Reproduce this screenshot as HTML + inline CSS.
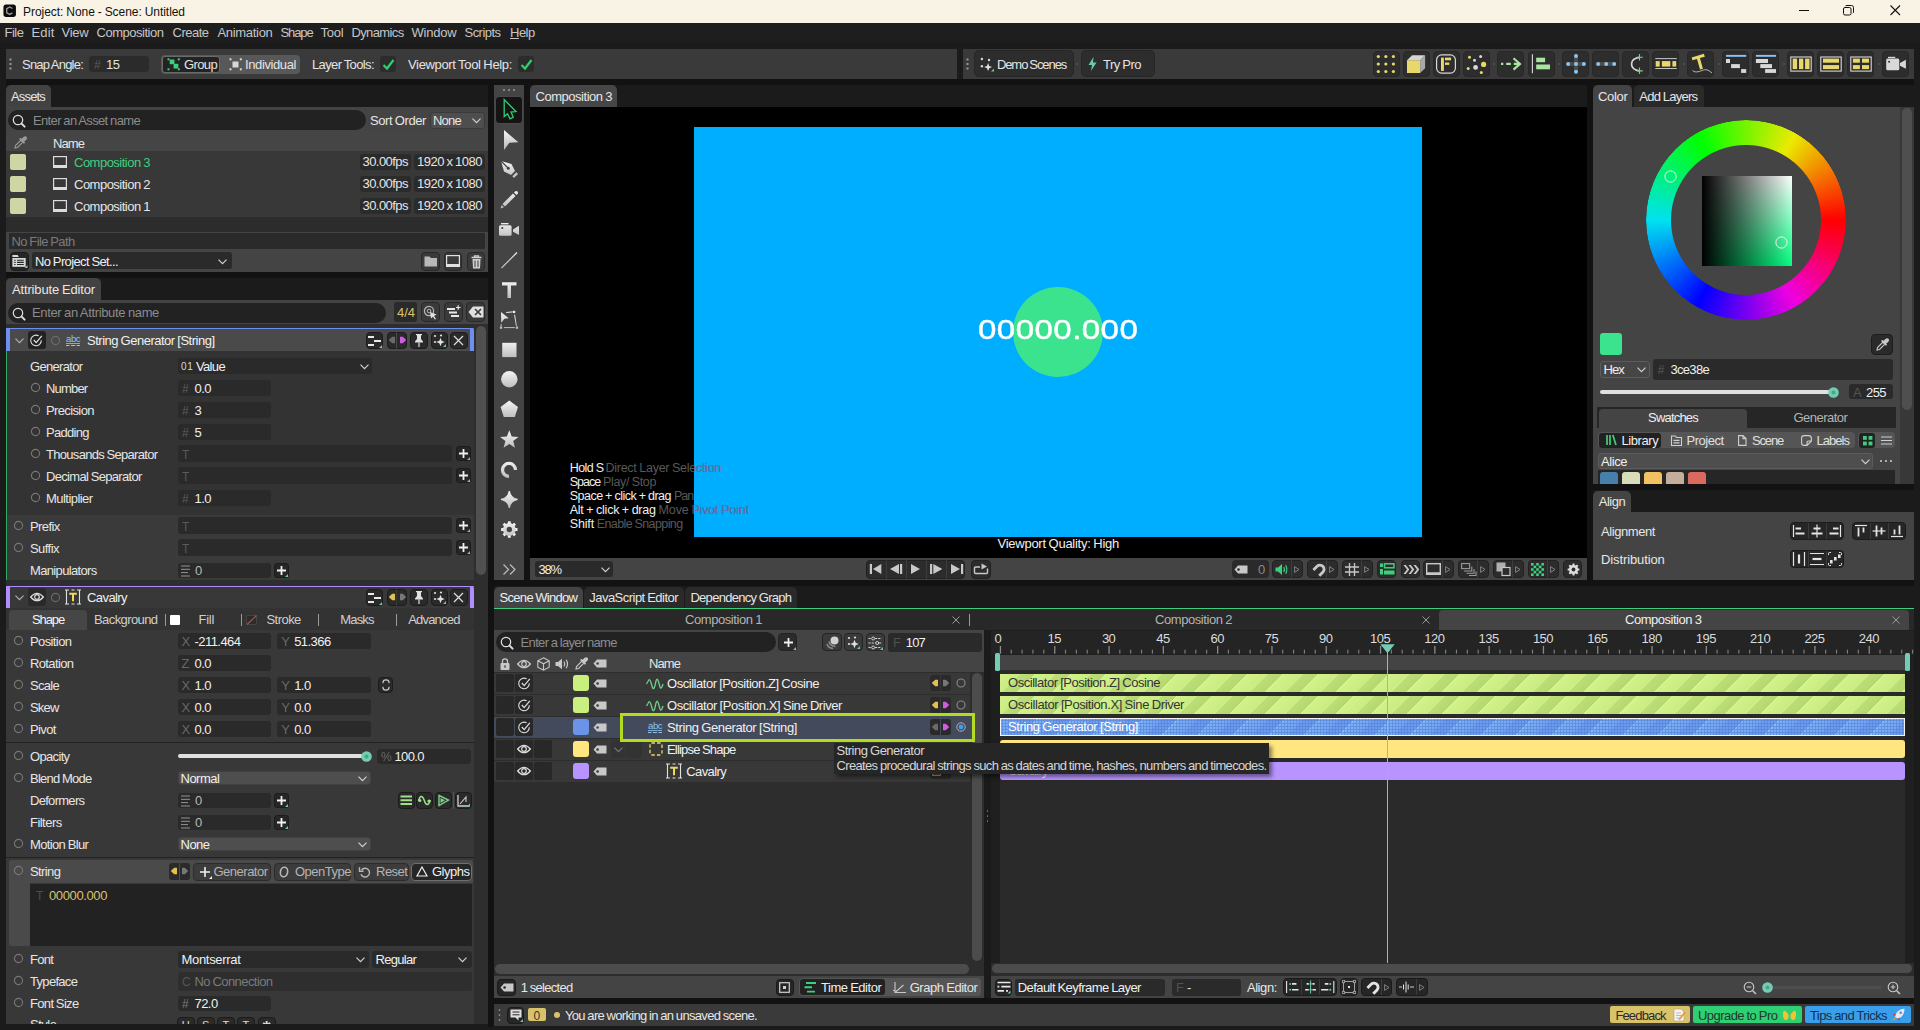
<!DOCTYPE html>
<html lang="en"><head><meta charset="utf-8"><title>Project: None - Scene: Untitled</title>
<style>html,body{margin:0;padding:0;}body{width:1920px;height:1030px;overflow:hidden;background:#1b1b1b;position:relative;font-family:"Liberation Sans",sans-serif;font-size:13px;color:#dcdcdc;}
.a{position:absolute;box-sizing:border-box;overflow:visible;}svg.a{overflow:visible}</style></head>
<body>
<div class="a " style="left:6px;top:79px;width:1908px;height:6.2px;background:#121212;"></div>
<div class="a " style="left:488.2px;top:85.2px;width:5.8px;height:942px;background:#121212;"></div>
<div class="a " style="left:524px;top:85.2px;width:6px;height:494.6px;background:#121212;"></div>
<div class="a " style="left:1587px;top:85.2px;width:6px;height:494.6px;background:#121212;"></div>
<div class="a " style="left:494px;top:579.8px;width:1420px;height:6.2px;background:#121212;"></div>
<div class="a " style="left:6px;top:272px;width:482.2px;height:6px;background:#121212;"></div>
<div class="a " style="left:1593px;top:484px;width:321px;height:6.4px;background:#121212;"></div>
<div class="a " style="left:494px;top:997.8px;width:1420px;height:6.2px;background:#121212;"></div>
<div class="a " style="left:0px;top:0px;width:1920px;height:23px;background:#f9f3e5;"></div>
<svg class="a" style="left:3.4px;top:4.4px;" width="13.4" height="13.4" viewBox="0 0 15 15"><rect x="0.5" y="0.5" width="14" height="14" rx="3" fill="#0c0c0c"/><path d="M10.6 5 L7.5 3.3 L4.2 5.2 V9.8 L7.5 11.7 L10.6 10" fill="none" stroke="#9a9a9a" stroke-width="1.5"/></svg>
<div class="a" style="left:23.0px;top:1.5px;height:20px;line-height:20px;color:#111;font-size:12px;letter-spacing:-0.050px;word-spacing:-0.3px;white-space:pre;">Project: None - Scene: Untitled</div>
<svg class="a" style="left:1799px;top:10px;" width="11" height="1" viewBox="0 0 11 1"><rect width="10" height="1" fill="#111"/></svg>
<svg class="a" style="left:1843px;top:5px;" width="12" height="11" viewBox="0 0 12 11"><rect x="0.5" y="2.5" width="7.5" height="7.5" rx="1.5" fill="none" stroke="#111" stroke-width="1"/><path d="M2.5 1 Q2.8 0.5 4 0.5 H8.5 Q10.5 0.5 10.5 2.5 V7 Q10.5 7.8 10 8.2" fill="none" stroke="#111"/></svg>
<svg class="a" style="left:1890px;top:5px;" width="11" height="11" viewBox="0 0 11 11"><path d="M0.5 0.5 L10 10 M10 0.5 L0.5 10" stroke="#111" stroke-width="1.1" fill="none"/></svg>
<div class="a " style="left:0px;top:23px;width:1920px;height:18.5px;background:#1e1e1e;"></div>
<div class="a" style="left:4.5px;top:22.9px;height:20px;line-height:20px;color:#c6c6c6;font-size:13px;letter-spacing:-0.487px;word-spacing:-0.5px;white-space:pre;">File</div>
<div class="a" style="left:31.5px;top:22.9px;height:20px;line-height:20px;color:#c6c6c6;font-size:13px;letter-spacing:0.149px;word-spacing:-0.5px;white-space:pre;">Edit</div>
<div class="a" style="left:61.5px;top:22.9px;height:20px;line-height:20px;color:#c6c6c6;font-size:13px;letter-spacing:-0.236px;word-spacing:-0.5px;white-space:pre;">View</div>
<div class="a" style="left:96.5px;top:22.9px;height:20px;line-height:20px;color:#c6c6c6;font-size:13px;letter-spacing:-0.478px;word-spacing:-0.5px;white-space:pre;">Composition</div>
<div class="a" style="left:172.5px;top:22.9px;height:20px;line-height:20px;color:#c6c6c6;font-size:13px;letter-spacing:-0.504px;word-spacing:-0.5px;white-space:pre;">Create</div>
<div class="a" style="left:217.5px;top:22.9px;height:20px;line-height:20px;color:#c6c6c6;font-size:13px;letter-spacing:-0.312px;word-spacing:-0.5px;white-space:pre;">Animation</div>
<div class="a" style="left:280.5px;top:22.9px;height:20px;line-height:20px;color:#c6c6c6;font-size:13px;letter-spacing:-1.119px;word-spacing:-0.5px;white-space:pre;">Shape</div>
<div class="a" style="left:320.5px;top:22.9px;height:20px;line-height:20px;color:#c6c6c6;font-size:13px;letter-spacing:-0.212px;word-spacing:-0.5px;white-space:pre;">Tool</div>
<div class="a" style="left:351.5px;top:22.9px;height:20px;line-height:20px;color:#c6c6c6;font-size:13px;letter-spacing:-0.634px;word-spacing:-0.5px;white-space:pre;">Dynamics</div>
<div class="a" style="left:411.5px;top:22.9px;height:20px;line-height:20px;color:#c6c6c6;font-size:13px;letter-spacing:-0.206px;word-spacing:-0.5px;white-space:pre;">Window</div>
<div class="a" style="left:464.5px;top:22.9px;height:20px;line-height:20px;color:#c6c6c6;font-size:13px;letter-spacing:-0.533px;word-spacing:-0.5px;white-space:pre;">Scripts</div>
<div class="a" style="left:510.0px;top:22.9px;height:20px;line-height:20px;color:#c6c6c6;font-size:13px;letter-spacing:-0.500px;word-spacing:-0.5px;white-space:pre;"><u>H</u>elp</div>
<div class="a " style="left:6px;top:49px;width:951px;height:30px;background:#3a3a3a;"></div>
<svg class="a" style="left:9px;top:57px;" width="3" height="14" viewBox="0 0 3 14"><rect x="0.5" y="1.5" width="2" height="2" fill="#999"/><rect x="0.5" y="6" width="2" height="2" fill="#999"/><rect x="0.5" y="10.5" width="2" height="2" fill="#999"/></svg>
<div class="a" style="left:22.0px;top:54.5px;height:20px;line-height:20px;color:#e4e4e4;font-size:13px;letter-spacing:-0.784px;word-spacing:-0.5px;white-space:pre;">Snap Angle:</div>
<div class="a " style="left:89px;top:56px;width:60px;height:16px;background:#2b2b2b;border-radius:3px;"></div>
<div class="a" style="left:94.0px;top:54.5px;height:20px;line-height:20px;color:#5a5a5a;font-size:12px;letter-spacing:-0.415px;word-spacing:-0.5px;white-space:pre;">#</div>
<div class="a" style="left:106.0px;top:54.5px;height:20px;line-height:20px;color:#e4e4e4;font-size:13px;letter-spacing:-0.450px;word-spacing:-0.5px;white-space:pre;">15</div>
<div class="a " style="left:161px;top:55px;width:139px;height:19px;background:#585858;border-radius:4px;"></div>
<div class="a " style="left:162px;top:56px;width:58px;height:17px;background:#232323;border-radius:3px;border:1px solid #6a6a6a;box-sizing:border-box;"></div>
<svg class="a" style="left:167px;top:58px;" width="13" height="13" viewBox="0 0 13 13"><rect x="2.7" y="1.5" width="4.7" height="4.7" fill="#3ecf7d"/><rect x="6.6" y="5.8" width="4.7" height="4.7" fill="#3ecf7d"/><rect x="0.5" y="0.3" width="2" height="2" fill="#3ecf7d"/><rect x="0.5" y="10.3" width="2" height="2" fill="#3ecf7d"/><rect x="10.8" y="0.3" width="2" height="2" fill="#3ecf7d"/><rect x="10.8" y="10.3" width="2" height="2" fill="#3ecf7d"/></svg>
<div class="a" style="left:184.0px;top:54.5px;height:20px;line-height:20px;color:#e4e4e4;font-size:13px;letter-spacing:-0.627px;word-spacing:-0.5px;white-space:pre;">Group</div>
<svg class="a" style="left:229px;top:58px;" width="13" height="13" viewBox="0 0 13 13"><rect x="3.5" y="3.5" width="6" height="6" fill="#d8d8d8"/><rect x="0.5" y="0.3" width="2" height="2" fill="#d8d8d8"/><rect x="0.5" y="10.3" width="2" height="2" fill="#d8d8d8"/><rect x="10.8" y="0.3" width="2" height="2" fill="#d8d8d8"/><rect x="10.8" y="10.3" width="2" height="2" fill="#d8d8d8"/></svg>
<div class="a" style="left:245.0px;top:54.5px;height:20px;line-height:20px;color:#e4e4e4;font-size:13px;letter-spacing:-0.393px;word-spacing:-0.5px;white-space:pre;">Individual</div>
<div class="a" style="left:312.0px;top:54.5px;height:20px;line-height:20px;color:#e4e4e4;font-size:13px;letter-spacing:-0.613px;word-spacing:-0.5px;white-space:pre;">Layer Tools:</div>
<div class="a " style="left:380px;top:56px;width:16px;height:16px;background:#2c2c2c;border-radius:3px;"></div>
<svg class="a" style="left:381.5px;top:57.5px;" width="13" height="13" viewBox="0 0 13 13"><path d="M1.5 7 L5 10.5 L11.5 2" fill="none" stroke="#2fd070" stroke-width="2.2"/></svg>
<div class="a" style="left:408.0px;top:54.5px;height:20px;line-height:20px;color:#e4e4e4;font-size:13px;letter-spacing:-0.344px;word-spacing:-0.5px;white-space:pre;">Viewport Tool Help:</div>
<div class="a " style="left:518px;top:56px;width:16px;height:16px;background:#2c2c2c;border-radius:3px;"></div>
<svg class="a" style="left:519.5px;top:57.5px;" width="13" height="13" viewBox="0 0 13 13"><path d="M1.5 7 L5 10.5 L11.5 2" fill="none" stroke="#2fd070" stroke-width="2.2"/></svg>
<div class="a " style="left:963px;top:49px;width:951px;height:30px;background:#3a3a3a;"></div>
<svg class="a" style="left:966px;top:57px;" width="3" height="14" viewBox="0 0 3 14"><rect x="0.5" y="1.5" width="2" height="2" fill="#999"/><rect x="0.5" y="6" width="2" height="2" fill="#999"/><rect x="0.5" y="10.5" width="2" height="2" fill="#999"/></svg>
<div class="a " style="left:974.4px;top:50.4px;width:99.2px;height:27px;background:#2d2d2d;border-radius:5px;border:1px solid #262626;box-sizing:border-box;"></div>
<svg class="a" style="left:979px;top:56px;" width="16" height="16" viewBox="0 0 16 16"><path d="M9.1 7.1 L10.219999999999999 9.98 L13.1 11.1 L10.219999999999999 12.219999999999999 L9.1 15.1 L7.9799999999999995 12.219999999999999 L5.1 11.1 L7.9799999999999995 9.98 Z" fill="#e0e0e0"/><circle cx="2.9" cy="3" r="1.2" fill="#d8d8d8"/><circle cx="10" cy="4" r="1.2" fill="#d8d8d8"/><circle cx="2.9" cy="10.3" r="1.2" fill="#d8d8d8"/><path d="M15 12.5 V15.5 H12 Z" fill="#6ec9a0"/></svg>
<div class="a" style="left:996.9px;top:54.900000000000006px;height:20px;line-height:20px;color:#e4e4e4;font-size:13px;letter-spacing:-1.069px;word-spacing:-0.5px;white-space:pre;">Demo Scenes</div>
<div class="a " style="left:1081.3px;top:50.4px;width:74px;height:27px;background:#2d2d2d;border-radius:5px;border:1px solid #262626;box-sizing:border-box;"></div>
<svg class="a" style="left:1076.2px;top:63.4px;" width="2" height="2" viewBox="0 0 2 2"><circle cx="1" cy="1" r="1" fill="#555"/></svg>
<svg class="a" style="left:1088px;top:57px;" width="9" height="14" viewBox="0 0 9 14"><path d="M5.5 0 L0.5 8 H4 L3 14 L8.5 5.5 H5 Z" fill="#6ec9a8"/></svg>
<div class="a" style="left:1103.0px;top:54.900000000000006px;height:20px;line-height:20px;color:#e4e4e4;font-size:13px;letter-spacing:-0.519px;word-spacing:-0.5px;white-space:pre;">Try Pro</div>
<div class="a " style="left:1372.6px;top:50.7px;width:27px;height:26.6px;background:#2d2d2d;border-radius:4px;border:1px solid #282828;box-sizing:border-box;"></div>
<svg class="a" style="left:1376px;top:54px;" width="21" height="20" viewBox="0 0 21 20"><circle cx="2.3" cy="2.5" r="1.6" fill="#e8d76a"/><circle cx="2.3" cy="10.0" r="1.6" fill="#e8d76a"/><circle cx="2.3" cy="17.5" r="1.6" fill="#e8d76a"/><circle cx="9.85" cy="2.5" r="1.6" fill="#e8d76a"/><circle cx="9.85" cy="10.0" r="1.6" fill="#e8d76a"/><circle cx="9.85" cy="17.5" r="1.6" fill="#e8d76a"/><circle cx="17.4" cy="2.5" r="1.6" fill="#e8d76a"/><circle cx="17.4" cy="10.0" r="1.6" fill="#e8d76a"/><circle cx="17.4" cy="17.5" r="1.6" fill="#e8d76a"/></svg>
<div class="a " style="left:1402.6px;top:50.7px;width:27px;height:26.6px;background:#2d2d2d;border-radius:4px;border:1px solid #282828;box-sizing:border-box;"></div>
<svg class="a" style="left:1406px;top:54px;" width="21" height="20" viewBox="0 0 21 20"><rect x="1" y="6.2" width="13.1" height="12.8" fill="#e8d76a"/><path d="M1 6.2 L6.1 1.3 H19.1 L14.1 6.2 Z" fill="#d4d4d4"/><path d="M14.1 6.2 L19.1 1.3 V14.2 L14.1 19 Z" fill="#a8a8a8"/></svg>
<div class="a " style="left:1432.6px;top:50.7px;width:27px;height:26.6px;background:#2d2d2d;border-radius:4px;border:1px solid #282828;box-sizing:border-box;"></div>
<svg class="a" style="left:1436px;top:54px;" width="21" height="20" viewBox="0 0 21 20"><rect x="0.6" y="0.9" width="18.8" height="18.2" rx="5" fill="none" stroke="#d8d8d8" stroke-width="1.2"/><rect x="5" y="3.6" width="2.9" height="13.3" fill="#e8d76a"/><rect x="9" y="3.6" width="6.1" height="2.7" fill="#e8d76a"/><rect x="9" y="8.5" width="4.3" height="2.4" fill="#e8d76a"/></svg>
<div class="a " style="left:1462.6px;top:50.7px;width:27px;height:26.6px;background:#2d2d2d;border-radius:4px;border:1px solid #282828;box-sizing:border-box;"></div>
<svg class="a" style="left:1466px;top:54px;" width="21" height="20" viewBox="0 0 21 20"><circle cx="3.5" cy="3.3" r="1.5" fill="#e8d76a"/><circle cx="2.2" cy="14.5" r="1.5" fill="#e8d76a"/><circle cx="15.3" cy="18.4" r="1.5" fill="#e8d76a"/><circle cx="14.6" cy="2.4" r="1.5" fill="#d8d8d8"/><circle cx="8.5" cy="6.3" r="1.5" fill="#d8d8d8"/><circle cx="9.6" cy="13.4" r="2.4" fill="#d8d8d8"/><circle cx="17.6" cy="10.4" r="2.6" fill="#e8d76a"/></svg>
<div class="a " style="left:1496.6px;top:50.7px;width:27px;height:26.6px;background:#2d2d2d;border-radius:4px;border:1px solid #282828;box-sizing:border-box;"></div>
<svg class="a" style="left:1500px;top:54px;" width="21" height="20" viewBox="0 0 21 20"><path d="M1 9.9 H3.3 M6.2 9.9 H10.8 M13.8 9.9 H20" stroke="#a8e6a0" stroke-width="2.1" fill="none"/><path d="M13.5 4.2 L20 9.9 L13.5 15.6" stroke="#a8e6a0" stroke-width="2.1" fill="none"/></svg>
<div class="a " style="left:1527.6px;top:50.7px;width:27px;height:26.6px;background:#2d2d2d;border-radius:4px;border:1px solid #282828;box-sizing:border-box;"></div>
<svg class="a" style="left:1531px;top:54px;" width="21" height="20" viewBox="0 0 21 20"><path d="M1.4 0.3 V19.3" stroke="#d8d8d8" stroke-width="1.1"/><rect x="5.2" y="3.7" width="8.9" height="4.5" fill="#a8e6a0"/><rect x="5.2" y="10.5" width="13.8" height="4.8" fill="#a8e6a0"/></svg>
<div class="a " style="left:1561.6px;top:50.7px;width:27px;height:26.6px;background:#2d2d2d;border-radius:4px;border:1px solid #282828;box-sizing:border-box;"></div>
<svg class="a" style="left:1565px;top:54px;" width="21" height="20" viewBox="0 0 21 20"><path d="M3.1 9.9 H18.9 M11 2 V17.8" stroke="#4c4c4c" stroke-width="4"/><circle cx="11" cy="9.9" r="2" fill="#8cc4f0"/><circle cx="3.1" cy="9.9" r="2" fill="#8cc4f0"/><circle cx="18.9" cy="9.9" r="2" fill="#8cc4f0"/><circle cx="11" cy="2" r="2" fill="#8cc4f0"/><circle cx="11" cy="17.8" r="2" fill="#8cc4f0"/></svg>
<div class="a " style="left:1591.6px;top:50.7px;width:27px;height:26.6px;background:#2d2d2d;border-radius:4px;border:1px solid #282828;box-sizing:border-box;"></div>
<svg class="a" style="left:1595px;top:54px;" width="21" height="20" viewBox="0 0 21 20"><path d="M3.1 9.9 H19.2" stroke="#4c4c4c" stroke-width="4"/><circle cx="3.1" cy="9.9" r="2" fill="#8cc4f0"/><circle cx="11.2" cy="9.9" r="2" fill="#8cc4f0"/><circle cx="19.2" cy="9.9" r="2" fill="#8cc4f0"/></svg>
<div class="a " style="left:1621.6px;top:50.7px;width:27px;height:26.6px;background:#2d2d2d;border-radius:4px;border:1px solid #282828;box-sizing:border-box;"></div>
<svg class="a" style="left:1625px;top:54px;" width="21" height="20" viewBox="0 0 21 20"><path d="M14.2 3.3 C4 4.5 4 15.5 14.2 16.9" fill="none" stroke="#d8d8d8" stroke-width="1.7"/><path d="M14.5 0 V6.6 M11.8 3.3 H17.8 M14.5 13.6 V20 M11.8 16.9 H17.8" stroke="#7ecf8a" stroke-width="1.1"/></svg>
<div class="a " style="left:1651.6px;top:50.7px;width:27px;height:26.6px;background:#2d2d2d;border-radius:4px;border:1px solid #282828;box-sizing:border-box;"></div>
<svg class="a" style="left:1655px;top:54px;" width="21" height="20" viewBox="0 0 21 20"><path d="M0.3 4.6 H21.8 M0.3 14.5 H21.8" stroke="#d8d8d8" stroke-width="0.9"/><rect x="0.7" y="7.1" width="4" height="5.5" fill="#e8d76a"/><rect x="6.9" y="7.1" width="8.4" height="5.5" fill="#e8d76a"/><rect x="17.4" y="7.1" width="3.8" height="5.5" fill="#e8d76a"/></svg>
<div class="a " style="left:1686.6px;top:50.7px;width:27px;height:26.6px;background:#2d2d2d;border-radius:4px;border:1px solid #282828;box-sizing:border-box;"></div>
<svg class="a" style="left:1690px;top:54px;" width="21" height="20" viewBox="0 0 21 20"><path d="M1.6 3.4 L13.9 -0.2 L14.8 2.7 L9.9 4.1 L12.9 14.7 L10 15.5 L7 5 L2.5 6.3 Z" fill="#e8d76a"/><path d="M2.5 16.5 C6 19.5 10 17 13.5 16 S19 16.5 22 19" fill="none" stroke="#b8b8b8" stroke-width="1"/></svg>
<div class="a " style="left:1721.6px;top:50.7px;width:27px;height:26.6px;background:#2d2d2d;border-radius:4px;border:1px solid #282828;box-sizing:border-box;"></div>
<svg class="a" style="left:1725px;top:54px;" width="21" height="20" viewBox="0 0 21 20"><rect x="1" y="0.9" width="20.2" height="1.9" fill="#8cc4f0"/><rect x="1" y="5" width="4" height="4" fill="#d8d8d8"/><rect x="6.1" y="10.1" width="8.8" height="4" fill="#d8d8d8"/><rect x="16.1" y="15.1" width="5.1" height="3.8" fill="#d8d8d8"/></svg>
<div class="a " style="left:1751.6px;top:50.7px;width:27px;height:26.6px;background:#2d2d2d;border-radius:4px;border:1px solid #282828;box-sizing:border-box;"></div>
<svg class="a" style="left:1755px;top:54px;" width="21" height="20" viewBox="0 0 21 20"><rect x="0.9" y="0.9" width="20.1" height="1.9" fill="#8cc4f0"/><rect x="0.9" y="5" width="12.1" height="4" fill="#d8d8d8"/><rect x="5.3" y="10.1" width="11.7" height="4" fill="#d8d8d8"/><rect x="10.1" y="15.1" width="10.9" height="3.8" fill="#d8d8d8"/></svg>
<div class="a " style="left:1786.6px;top:50.7px;width:27px;height:26.6px;background:#2d2d2d;border-radius:4px;border:1px solid #282828;box-sizing:border-box;"></div>
<svg class="a" style="left:1790px;top:54px;" width="21" height="20" viewBox="0 0 21 20"><rect x="0.8" y="3" width="20.4" height="14.1" fill="none" stroke="#d8d8d8" stroke-width="1.1"/><rect x="2.7" y="4.6" width="4.4" height="10.5" fill="#e8d76a"/><rect x="9" y="4.6" width="4.3" height="10.5" fill="#e8d76a"/><rect x="15.1" y="4.6" width="4.4" height="10.5" fill="#e8d76a"/></svg>
<div class="a " style="left:1816.6px;top:50.7px;width:27px;height:26.6px;background:#2d2d2d;border-radius:4px;border:1px solid #282828;box-sizing:border-box;"></div>
<svg class="a" style="left:1820px;top:54px;" width="21" height="20" viewBox="0 0 21 20"><rect x="0.8" y="3" width="20.4" height="14.1" fill="none" stroke="#d8d8d8" stroke-width="1.1"/><rect x="3" y="4.6" width="16" height="4.1" fill="#e8d76a"/><rect x="3" y="11.1" width="16" height="4" fill="#e8d76a"/></svg>
<div class="a " style="left:1846.6px;top:50.7px;width:27px;height:26.6px;background:#2d2d2d;border-radius:4px;border:1px solid #282828;box-sizing:border-box;"></div>
<svg class="a" style="left:1850px;top:54px;" width="21" height="20" viewBox="0 0 21 20"><rect x="0.8" y="3" width="20.4" height="14.1" fill="none" stroke="#d8d8d8" stroke-width="1.1"/><rect x="2.9" y="4.6" width="7" height="4.1" fill="#e8d76a"/><rect x="12" y="4.6" width="7" height="4.1" fill="#e8d76a"/><rect x="2.9" y="11.1" width="7" height="4" fill="#e8d76a"/><rect x="12" y="11.1" width="7" height="4" fill="#e8d76a"/></svg>
<div class="a " style="left:1881.6px;top:50.7px;width:27px;height:26.6px;background:#2d2d2d;border-radius:4px;border:1px solid #282828;box-sizing:border-box;"></div>
<svg class="a" style="left:1885px;top:54px;" width="21" height="20" viewBox="0 0 21 20"><rect x="1.2" y="4.6" width="13.1" height="11.7" rx="1.5" fill="#d8d8d8"/><rect x="3" y="2.8" width="7.3" height="1.2" fill="#d8d8d8"/><path d="M15 9 L20.9 5.7 V14.8 L15 11.8 Z" fill="#d8d8d8"/><circle cx="4.1" cy="7.8" r="1" fill="#2c2c2c"/></svg>
<svg class="a" style="left:1493px;top:63px;" width="2" height="2" viewBox="0 0 2 2"><circle cx="1" cy="1" r="1" fill="#555"/></svg>
<svg class="a" style="left:1558px;top:63px;" width="2" height="2" viewBox="0 0 2 2"><circle cx="1" cy="1" r="1" fill="#555"/></svg>
<svg class="a" style="left:1683px;top:63px;" width="2" height="2" viewBox="0 0 2 2"><circle cx="1" cy="1" r="1" fill="#555"/></svg>
<svg class="a" style="left:1718px;top:63px;" width="2" height="2" viewBox="0 0 2 2"><circle cx="1" cy="1" r="1" fill="#555"/></svg>
<svg class="a" style="left:1783px;top:63px;" width="2" height="2" viewBox="0 0 2 2"><circle cx="1" cy="1" r="1" fill="#555"/></svg>
<svg class="a" style="left:1878px;top:63px;" width="2" height="2" viewBox="0 0 2 2"><circle cx="1" cy="1" r="1" fill="#555"/></svg>
<div class="a " style="left:6px;top:85.2px;width:45px;height:21.8px;background:#424242;border-radius:5px 5px 0 0;"></div>
<div class="a" style="left:11.0px;top:86.8px;height:20px;line-height:20px;color:#e6e6e6;font-size:13px;letter-spacing:-0.836px;word-spacing:-0.5px;white-space:pre;">Assets</div>
<div class="a " style="left:6px;top:107px;width:482px;height:165px;background:#444;"></div>
<div class="a " style="left:8px;top:110px;width:358px;height:20px;background:#222;border-radius:10px;"></div>
<svg class="a" style="left:12px;top:114px;" width="14" height="14" viewBox="0 0 14 14"><circle cx="6" cy="6" r="4.7" fill="none" stroke="#e0e0e0" stroke-width="1.2"/><path d="M9.6 9.6 L12.6 12.6" stroke="#e0e0e0" stroke-width="2" stroke-linecap="round"/></svg>
<div class="a" style="left:33.0px;top:111.2px;height:20px;line-height:20px;color:#8c8c8c;font-size:13px;letter-spacing:-0.641px;word-spacing:-0.5px;white-space:pre;">Enter an Asset name</div>
<div class="a" style="left:370.0px;top:111.2px;height:20px;line-height:20px;color:#e6e6e6;font-size:13px;letter-spacing:-0.419px;word-spacing:-0.5px;white-space:pre;">Sort Order</div>
<div class="a " style="left:430px;top:112px;width:55px;height:17px;background:#4e4e4e;border-radius:3px;border:1px solid #3a3a3a;box-sizing:border-box;"></div>
<div class="a" style="left:433.0px;top:111.2px;height:20px;line-height:20px;color:#e6e6e6;font-size:13px;letter-spacing:-0.770px;word-spacing:-0.5px;white-space:pre;">None</div>
<svg class="a" style="left:472px;top:118px;" width="9" height="6" viewBox="0 0 9 6"><path d="M0.5 0.7 L4.5 4.7 L8.5 0.7" fill="none" stroke="#d0d0d0" stroke-width="1.2"/></svg>
<div class="a " style="left:6px;top:131px;width:482px;height:20px;background:#454545;"></div>
<svg class="a" style="left:14px;top:136px;" width="13" height="13" viewBox="0 0 13 13"><path d="M1 12 L1.5 9.5 L7 4 L9 6 L3.5 11.5 Z" fill="none" stroke="#9a9a9a" stroke-width="1.1"/><path d="M6.3 3 L10 6.7 M7.5 4.2 L10 1.6 Q11.2 0.6 12 1.5 Q12.6 2.3 11.5 3.4 L9 5.7" stroke="#9a9a9a" stroke-width="1.8" fill="#9a9a9a" stroke-linecap="round"/></svg>
<div class="a" style="left:53.0px;top:133.5px;height:20px;line-height:20px;color:#e6e6e6;font-size:13px;letter-spacing:-0.920px;word-spacing:-0.5px;white-space:pre;">Name</div>
<div class="a " style="left:6px;top:151px;width:482px;height:22px;background:#383838;"></div>
<div class="a " style="left:10px;top:154px;width:16px;height:16px;background:#cfd6a3;border-radius:2px;"></div>
<svg class="a" style="left:53px;top:156px;" width="14" height="12" viewBox="0 0 14 12"><rect x="0.6" y="0.6" width="12.8" height="10" fill="none" stroke="#dcdcdc" stroke-width="1.2"/><rect x="0" y="9" width="14" height="3" fill="#dcdcdc"/></svg>
<div class="a" style="left:74.0px;top:153.0px;height:20px;line-height:20px;color:#3ecf7d;font-size:13px;letter-spacing:-0.508px;word-spacing:-0.5px;white-space:pre;">Composition 3</div>
<div class="a " style="left:360px;top:154px;width:51px;height:16px;background:#2b2b2b;border-radius:3px;"></div>
<div class="a" style="left:362.5px;top:151.8px;height:20px;line-height:20px;color:#e6e6e6;font-size:13px;letter-spacing:-0.547px;word-spacing:-0.5px;white-space:pre;">30.00fps</div>
<div class="a " style="left:414px;top:154px;width:71px;height:16px;background:#2b2b2b;border-radius:3px;"></div>
<div class="a" style="left:417.0px;top:151.8px;height:20px;line-height:20px;color:#e6e6e6;font-size:13px;letter-spacing:-0.506px;word-spacing:-0.5px;white-space:pre;">1920 x 1080</div>
<div class="a " style="left:6px;top:173px;width:482px;height:22px;background:#383838;"></div>
<div class="a " style="left:10px;top:176px;width:16px;height:16px;background:#cfd6a3;border-radius:2px;"></div>
<svg class="a" style="left:53px;top:178px;" width="14" height="12" viewBox="0 0 14 12"><rect x="0.6" y="0.6" width="12.8" height="10" fill="none" stroke="#dcdcdc" stroke-width="1.2"/><rect x="0" y="9" width="14" height="3" fill="#dcdcdc"/></svg>
<div class="a" style="left:74.0px;top:175.0px;height:20px;line-height:20px;color:#e6e6e6;font-size:13px;letter-spacing:-0.508px;word-spacing:-0.5px;white-space:pre;">Composition 2</div>
<div class="a " style="left:360px;top:176px;width:51px;height:16px;background:#2b2b2b;border-radius:3px;"></div>
<div class="a" style="left:362.5px;top:173.8px;height:20px;line-height:20px;color:#e6e6e6;font-size:13px;letter-spacing:-0.547px;word-spacing:-0.5px;white-space:pre;">30.00fps</div>
<div class="a " style="left:414px;top:176px;width:71px;height:16px;background:#2b2b2b;border-radius:3px;"></div>
<div class="a" style="left:417.0px;top:173.8px;height:20px;line-height:20px;color:#e6e6e6;font-size:13px;letter-spacing:-0.506px;word-spacing:-0.5px;white-space:pre;">1920 x 1080</div>
<div class="a " style="left:6px;top:195px;width:482px;height:22px;background:#383838;"></div>
<div class="a " style="left:10px;top:198px;width:16px;height:16px;background:#cfd6a3;border-radius:2px;"></div>
<svg class="a" style="left:53px;top:200px;" width="14" height="12" viewBox="0 0 14 12"><rect x="0.6" y="0.6" width="12.8" height="10" fill="none" stroke="#dcdcdc" stroke-width="1.2"/><rect x="0" y="9" width="14" height="3" fill="#dcdcdc"/></svg>
<div class="a" style="left:74.0px;top:197.0px;height:20px;line-height:20px;color:#e6e6e6;font-size:13px;letter-spacing:-0.508px;word-spacing:-0.5px;white-space:pre;">Composition 1</div>
<div class="a " style="left:360px;top:198px;width:51px;height:16px;background:#2b2b2b;border-radius:3px;"></div>
<div class="a" style="left:362.5px;top:195.8px;height:20px;line-height:20px;color:#e6e6e6;font-size:13px;letter-spacing:-0.547px;word-spacing:-0.5px;white-space:pre;">30.00fps</div>
<div class="a " style="left:414px;top:198px;width:71px;height:16px;background:#2b2b2b;border-radius:3px;"></div>
<div class="a" style="left:417.0px;top:195.8px;height:20px;line-height:20px;color:#e6e6e6;font-size:13px;letter-spacing:-0.506px;word-spacing:-0.5px;white-space:pre;">1920 x 1080</div>
<div class="a " style="left:6px;top:217px;width:482px;height:15.2px;background:#2c2c2c;"></div>
<div class="a " style="left:8.8px;top:233.1px;width:476.2px;height:15.8px;background:#2a2a2a;border-radius:1px;"></div>
<div class="a" style="left:11.5px;top:232.0px;height:20px;line-height:20px;color:#7a7a7a;font-size:13px;letter-spacing:-0.628px;word-spacing:-0.5px;white-space:pre;">No File Path</div>
<div class="a " style="left:9.5px;top:251.5px;width:19px;height:19px;background:#262626;border-radius:4px;border:1px solid #1c1c1c;box-sizing:border-box;"></div>
<svg class="a" style="left:11.5px;top:254px;" width="15" height="14" viewBox="0 0 15 14"><path d="M0.4 0.9 H5.6 L6.9 3 H0.4 Z" fill="#d8d8d8"/><rect x="0.4" y="4" width="13.3" height="8.8" fill="#d8d8d8"/><path d="M2.2 6.3 H3.6 M5 6.3 H11.8 M2.2 8.4 H3.6 M5 8.4 H11.8 M2.2 10.5 H3.6 M5 10.5 H11.8" stroke="#262626" stroke-width="1.1"/><path d="M15.5 11 V14 H12.5 Z" fill="#6ec9a0"/></svg>
<div class="a " style="left:32px;top:252px;width:200px;height:17px;background:#2a2a2a;border-radius:3px;"></div>
<div class="a" style="left:35.0px;top:252.0px;height:20px;line-height:20px;color:#f0f0f0;font-size:13px;letter-spacing:-0.627px;word-spacing:-0.5px;white-space:pre;">No Project Set...</div>
<svg class="a" style="left:218px;top:259px;" width="9" height="6" viewBox="0 0 9 6"><path d="M0.5 0.7 L4.5 4.7 L8.5 0.7" fill="none" stroke="#d0d0d0" stroke-width="1.2"/></svg>
<div class="a " style="left:421px;top:252px;width:18.5px;height:18.5px;background:#3a3a3a;border-radius:4px;border:1px solid #282828;box-sizing:border-box;"></div>
<svg class="a" style="left:423.5px;top:255px;" width="14" height="12" viewBox="0 0 14 12"><path d="M0.5 1.5 H5.5 L7 3 H13 V11.5 H0.5 Z" fill="#b8b8b8"/></svg>
<div class="a " style="left:443.5px;top:252px;width:18.5px;height:18.5px;background:#3a3a3a;border-radius:4px;border:1px solid #282828;box-sizing:border-box;"></div>
<svg class="a" style="left:446.0px;top:255px;" width="14" height="12" viewBox="0 0 14 12"><rect x="0.6" y="0.6" width="12.8" height="10" fill="none" stroke="#e0e0e0" stroke-width="1.2"/><rect x="0" y="9" width="14" height="3" fill="#e0e0e0"/></svg>
<div class="a " style="left:466.5px;top:252px;width:18.5px;height:18.5px;background:#3a3a3a;border-radius:4px;border:1px solid #282828;box-sizing:border-box;"></div>
<svg class="a" style="left:470.5px;top:254.5px;" width="11" height="14" viewBox="0 0 11 14"><path d="M0.5 2.5 H10.5 M3.5 2.5 V0.8 H7.5 V2.5" stroke="#d0d0d0" stroke-width="1.3" fill="none"/><path d="M1.5 4 H9.5 L9 13.5 H2 Z" fill="#d0d0d0"/><path d="M4 5.5 V12 M7 5.5 V12" stroke="#3a3a3a" stroke-width="1"/></svg>
<div class="a " style="left:6px;top:278px;width:95px;height:22px;background:#424242;border-radius:5px 5px 0 0;"></div>
<div class="a" style="left:12.0px;top:280.2px;height:20px;line-height:20px;color:#e6e6e6;font-size:13px;letter-spacing:-0.156px;word-spacing:-0.5px;white-space:pre;">Attribute Editor</div>
<div class="a " style="left:6px;top:300px;width:482px;height:24px;background:#444;"></div>
<div class="a " style="left:6px;top:324px;width:482px;height:700px;background:#2e2e2e;"></div>
<div class="a " style="left:8px;top:302.5px;width:378px;height:20px;background:#222;border-radius:10px;"></div>
<svg class="a" style="left:12px;top:307px;" width="14" height="14" viewBox="0 0 14 14"><circle cx="6" cy="6" r="4.7" fill="none" stroke="#e0e0e0" stroke-width="1.2"/><path d="M9.6 9.6 L12.6 12.6" stroke="#e0e0e0" stroke-width="2" stroke-linecap="round"/></svg>
<div class="a" style="left:32.0px;top:303.2px;height:20px;line-height:20px;color:#8c8c8c;font-size:13px;letter-spacing:-0.352px;word-spacing:-0.5px;white-space:pre;">Enter an Attribute name</div>
<div class="a " style="left:394px;top:302px;width:23px;height:20px;background:#2a2a2a;border-radius:3px;"></div>
<div class="a" style="left:397.0px;top:303.0px;height:20px;line-height:20px;color:#d9c36a;font-size:13px;letter-spacing:-0.024px;word-spacing:-0.5px;white-space:pre;">4/4</div>
<div class="a " style="left:420.5px;top:302px;width:19.5px;height:20px;background:#3a3a3a;border-radius:4px;border:1px solid #282828;box-sizing:border-box;"></div>
<div class="a " style="left:443.5px;top:302px;width:19.5px;height:20px;background:#3a3a3a;border-radius:4px;border:1px solid #282828;box-sizing:border-box;"></div>
<div class="a " style="left:465.5px;top:302px;width:19.5px;height:20px;background:#3a3a3a;border-radius:4px;border:1px solid #282828;box-sizing:border-box;"></div>
<svg class="a" style="left:423px;top:305px;" width="15" height="15" viewBox="0 0 15 15"><circle cx="6" cy="6" r="4.6" fill="none" stroke="#b8b8b8" stroke-width="1.2"/><circle cx="6" cy="6" r="1.8" fill="none" stroke="#b8b8b8" stroke-width="1"/><path d="M7 7 L13.5 9.5 L11 11 L13 14 L11.8 14.6 L10 11.8 L8 13.5 Z" fill="#e0e0e0"/></svg>
<svg class="a" style="left:446px;top:305px;" width="15" height="14" viewBox="0 0 15 14"><path d="M1 4 H9 M3 7.5 H11 M5 11 H13" stroke="#e8e8e8" stroke-width="2"/><path d="M10 2.5 H14.5 M12.2 0.3 V4.8" stroke="#e8e8e8" stroke-width="1.2"/></svg>
<svg class="a" style="left:467.5px;top:306px;" width="16" height="12" viewBox="0 0 16 12"><path d="M0.5 6 L5 0.5 H15.5 V11.5 H5 Z" fill="#e0e0e0"/><path d="M7 3 L13 9 M13 3 L7 9" stroke="#3a3a3a" stroke-width="1.6"/></svg>
<div class="a " style="left:476px;top:325.5px;width:10px;height:249px;background:#505050;border-radius:5px;"></div>
<div class="a " style="left:6px;top:328px;width:468px;height:23px;background:#4a4a4a;border-radius:0 3px 0 0;"></div>
<div class="a " style="left:6px;top:328px;width:468px;height:1.3px;background:#6f8ff0;border-radius:0 3px 0 0;"></div>
<div class="a " style="left:6px;top:328px;width:4px;height:23px;background:#6f8ff0;"></div>
<div class="a " style="left:470px;top:328px;width:4px;height:23px;background:#6f8ff0;border-radius:0 3px 0 0;"></div>
<svg class="a" style="left:15px;top:337.5px;" width="9" height="6" viewBox="0 0 9 6"><path d="M0.5 0.7 L4.5 4.7 L8.5 0.7" fill="none" stroke="#b0b0b0" stroke-width="1.2"/></svg>
<div class="a " style="left:28px;top:331px;width:18px;height:17.5px;background:#222;border-radius:3px;"></div>
<svg class="a" style="left:30px;top:334px;" width="14" height="12" viewBox="0 0 14 12"><path d="M11.3 6.2 A5.3 5.3 0 1 1 8.6 1.8" fill="none" stroke="#e0e0e0" stroke-width="1.1"/><path d="M3.8 6 L6.2 8.6 L11.8 1.8" fill="none" stroke="#e0e0e0" stroke-width="1.3"/></svg>
<svg class="a" style="left:50.5px;top:335.5px;" width="9" height="9" viewBox="0 0 9 9"><circle cx="4.5" cy="4.5" r="4.1" fill="none" stroke="#6a6a6a" stroke-width="1.1"/></svg>
<svg class="a" style="left:66px;top:334px;" width="15" height="13" viewBox="0 0 15 13"><text x="0" y="8" font-size="9.5" font-family="Liberation Sans" fill="#8cc4f0" letter-spacing="-0.4">abc</text><path d="M0 11.5 H3.5 M5 11.5 H9 M10.5 11.5 H14" stroke="#8cc4f0" stroke-width="1.1"/><path d="M0 9.5 H14" stroke="#8cc4f0" stroke-width="0.8"/></svg>
<div class="a" style="left:87.0px;top:331.2px;height:20px;line-height:20px;color:#f0f0f0;font-size:13px;letter-spacing:-0.495px;word-spacing:-0.5px;white-space:pre;">String Generator [String]</div>
<div class="a " style="left:365.5px;top:331.5px;width:17.5px;height:17px;background:#2a2a2a;border-radius:4px;border:1px solid #1c1c1c;box-sizing:border-box;"></div>
<div class="a " style="left:386.5px;top:331.5px;width:20.5px;height:17px;background:#2a2a2a;border-radius:4px;border:1px solid #1c1c1c;box-sizing:border-box;"></div>
<div class="a " style="left:410px;top:331.5px;width:17.5px;height:17px;background:#2a2a2a;border-radius:4px;border:1px solid #1c1c1c;box-sizing:border-box;"></div>
<div class="a " style="left:430.5px;top:331.5px;width:17.5px;height:17px;background:#2a2a2a;border-radius:4px;border:1px solid #1c1c1c;box-sizing:border-box;"></div>
<div class="a " style="left:450px;top:331.5px;width:17.5px;height:17px;background:#2a2a2a;border-radius:4px;border:1px solid #1c1c1c;box-sizing:border-box;"></div>
<div class="a " style="left:396.3px;top:331.5px;width:1px;height:17px;background:#484848;"></div>
<svg class="a" style="left:367px;top:333.5px;" width="16" height="14" viewBox="0 0 16 14"><path d="M1 3 H7 M1 11 H7 M7 7 H14" stroke="#e8e8e8" stroke-width="2"/><path d="M15 11 V14 H12 Z" fill="#6ec9a0"/></svg>
<svg class="a" style="left:386.5px;top:335px;" width="21" height="10" viewBox="0 0 21 10"><path d="M1.8 5 L5.2 1.8 H8 V8.2 H5.2 Z" fill="#6a6a6a"/><path d="M19.2 5 L15.8 1.8 H13 V8.2 H15.8 Z" fill="#d05ae0"/></svg>
<svg class="a" style="left:412px;top:333px;" width="14" height="15" viewBox="0 0 14 15"><path d="M4 1 H10 V2.2 H9 V6 L11 8.5 V9.5 H3 V8.5 L5 6 V2.2 H4 Z" fill="#e0e0e0"/><path d="M7 9.5 V14" stroke="#e0e0e0" stroke-width="1.2"/></svg>
<svg class="a" style="left:431.5px;top:332.5px;" width="16" height="15" viewBox="0 0 16 15"><path d="M8.5 4.8 L9.676 7.824 L12.7 9 L9.676 10.176 L8.5 13.2 L7.324 10.176 L4.3 9 L7.324 7.824 Z" fill="#e0e0e0"/><circle cx="3" cy="3" r="1.1" fill="#e0e0e0"/><circle cx="9" cy="2.5" r="1.1" fill="#e0e0e0"/><circle cx="3" cy="9" r="1.1" fill="#e0e0e0"/><path d="M14 11 V14 H11 Z" fill="#6ec9a0"/></svg>
<svg class="a" style="left:452.3px;top:333.7px;" width="13" height="13" viewBox="0 0 13 13"><path d="M2 2 L11 11 M11 2 L2 11" stroke="#e0e0e0" stroke-width="1.2"/></svg>
<div class="a " style="left:6px;top:351px;width:1.2px;height:229px;background:#2fae63;"></div>
<div class="a " style="left:7.2px;top:351px;width:466.8px;height:164px;background:#333;"></div>
<div class="a " style="left:7.2px;top:515px;width:466.8px;height:65px;background:#3a3a3a;"></div>
<div class="a" style="left:30.0px;top:357.2px;height:20px;line-height:20px;color:#e6e6e6;font-size:13px;letter-spacing:-0.683px;word-spacing:-0.5px;white-space:pre;">Generator</div>
<div class="a " style="left:177.5px;top:358.2px;width:194.5px;height:15.8px;background:#2a2a2a;border-radius:3px;"></div>
<div class="a" style="left:181.0px;top:357.0px;height:20px;line-height:20px;color:#d8d8d8;font-size:10px;letter-spacing:0.600px;word-spacing:-0.5px;white-space:pre;">01</div>
<div class="a" style="left:196.0px;top:357.2px;height:20px;line-height:20px;color:#f0f0f0;font-size:13px;letter-spacing:-0.657px;word-spacing:-0.5px;white-space:pre;">Value</div>
<svg class="a" style="left:360px;top:364px;" width="9" height="6" viewBox="0 0 9 6"><path d="M0.5 0.7 L4.5 4.7 L8.5 0.7" fill="none" stroke="#d0d0d0" stroke-width="1.2"/></svg>
<svg class="a" style="left:30.5px;top:383px;" width="9" height="9" viewBox="0 0 9 9"><circle cx="4.5" cy="4.5" r="4.1" fill="none" stroke="#777" stroke-width="1.1"/></svg>
<div class="a" style="left:46.0px;top:379.2px;height:20px;line-height:20px;color:#e6e6e6;font-size:13px;letter-spacing:-0.809px;word-spacing:-0.5px;white-space:pre;">Number</div>
<div class="a " style="left:177.5px;top:380.2px;width:93.5px;height:15.5px;background:#2a2a2a;border-radius:3px;"></div>
<div class="a" style="left:182.0px;top:379.0px;height:20px;line-height:20px;color:#5c5c5c;font-size:12px;letter-spacing:-0.415px;word-spacing:-0.5px;white-space:pre;">#</div>
<div class="a" style="left:194.5px;top:379.2px;height:20px;line-height:20px;color:#f0f0f0;font-size:13px;letter-spacing:-0.550px;word-spacing:-0.5px;white-space:pre;">0.0</div>
<svg class="a" style="left:30.5px;top:405px;" width="9" height="9" viewBox="0 0 9 9"><circle cx="4.5" cy="4.5" r="4.1" fill="none" stroke="#777" stroke-width="1.1"/></svg>
<div class="a" style="left:46.0px;top:401.2px;height:20px;line-height:20px;color:#e6e6e6;font-size:13px;letter-spacing:-0.624px;word-spacing:-0.5px;white-space:pre;">Precision</div>
<div class="a " style="left:177.5px;top:402.2px;width:93.5px;height:15.5px;background:#2a2a2a;border-radius:3px;"></div>
<div class="a" style="left:182.0px;top:401.0px;height:20px;line-height:20px;color:#5c5c5c;font-size:12px;letter-spacing:-0.415px;word-spacing:-0.5px;white-space:pre;">#</div>
<div class="a" style="left:194.5px;top:401.2px;height:20px;line-height:20px;color:#f0f0f0;font-size:13px;letter-spacing:-0.550px;word-spacing:-0.5px;white-space:pre;">3</div>
<svg class="a" style="left:30.5px;top:427px;" width="9" height="9" viewBox="0 0 9 9"><circle cx="4.5" cy="4.5" r="4.1" fill="none" stroke="#777" stroke-width="1.1"/></svg>
<div class="a" style="left:46.0px;top:423.2px;height:20px;line-height:20px;color:#e6e6e6;font-size:13px;letter-spacing:-0.716px;word-spacing:-0.5px;white-space:pre;">Padding</div>
<div class="a " style="left:177.5px;top:424.2px;width:93.5px;height:15.5px;background:#2a2a2a;border-radius:3px;"></div>
<div class="a" style="left:182.0px;top:423.0px;height:20px;line-height:20px;color:#5c5c5c;font-size:12px;letter-spacing:-0.415px;word-spacing:-0.5px;white-space:pre;">#</div>
<div class="a" style="left:194.5px;top:423.2px;height:20px;line-height:20px;color:#f0f0f0;font-size:13px;letter-spacing:-0.550px;word-spacing:-0.5px;white-space:pre;">5</div>
<svg class="a" style="left:30.5px;top:449px;" width="9" height="9" viewBox="0 0 9 9"><circle cx="4.5" cy="4.5" r="4.1" fill="none" stroke="#777" stroke-width="1.1"/></svg>
<div class="a" style="left:46.0px;top:445.2px;height:20px;line-height:20px;color:#e6e6e6;font-size:13px;letter-spacing:-0.696px;word-spacing:-0.5px;white-space:pre;">Thousands Separator</div>
<div class="a " style="left:177.5px;top:444.7px;width:274.5px;height:17.3px;background:#2a2a2a;border-radius:3px;"></div>
<div class="a" style="left:182.0px;top:444.5px;height:20px;line-height:20px;color:#5a5a5a;font-size:12px;letter-spacing:-0.415px;word-spacing:-0.5px;white-space:pre;">T</div>
<div class="a " style="left:455.5px;top:445.7px;width:15px;height:15px;background:#262626;border-radius:3px;border:1px solid #1c1c1c;box-sizing:border-box;"></div>
<svg class="a" style="left:456.5px;top:446.7px;" width="14" height="14" viewBox="0 0 14 14"><path d="M2 6.5 H11 M6.5 2 V11" stroke="#f0f0f0" stroke-width="1.8"/><path d="M13 10 V13 H10 Z" fill="#6ec9a0"/></svg>
<svg class="a" style="left:30.5px;top:471px;" width="9" height="9" viewBox="0 0 9 9"><circle cx="4.5" cy="4.5" r="4.1" fill="none" stroke="#777" stroke-width="1.1"/></svg>
<div class="a" style="left:46.0px;top:467.2px;height:20px;line-height:20px;color:#e6e6e6;font-size:13px;letter-spacing:-0.671px;word-spacing:-0.5px;white-space:pre;">Decimal Separator</div>
<div class="a " style="left:177.5px;top:466.7px;width:274.5px;height:17.3px;background:#2a2a2a;border-radius:3px;"></div>
<div class="a" style="left:182.0px;top:466.5px;height:20px;line-height:20px;color:#5a5a5a;font-size:12px;letter-spacing:-0.415px;word-spacing:-0.5px;white-space:pre;">T</div>
<div class="a " style="left:455.5px;top:467.7px;width:15px;height:15px;background:#262626;border-radius:3px;border:1px solid #1c1c1c;box-sizing:border-box;"></div>
<svg class="a" style="left:456.5px;top:468.7px;" width="14" height="14" viewBox="0 0 14 14"><path d="M2 6.5 H11 M6.5 2 V11" stroke="#f0f0f0" stroke-width="1.8"/><path d="M13 10 V13 H10 Z" fill="#6ec9a0"/></svg>
<svg class="a" style="left:30.5px;top:493px;" width="9" height="9" viewBox="0 0 9 9"><circle cx="4.5" cy="4.5" r="4.1" fill="none" stroke="#777" stroke-width="1.1"/></svg>
<div class="a" style="left:46.0px;top:489.2px;height:20px;line-height:20px;color:#e6e6e6;font-size:13px;letter-spacing:-0.546px;word-spacing:-0.5px;white-space:pre;">Multiplier</div>
<div class="a " style="left:177.5px;top:490.2px;width:93.5px;height:15.5px;background:#2a2a2a;border-radius:3px;"></div>
<div class="a" style="left:182.0px;top:489.0px;height:20px;line-height:20px;color:#5c5c5c;font-size:12px;letter-spacing:-0.415px;word-spacing:-0.5px;white-space:pre;">#</div>
<div class="a" style="left:194.5px;top:489.2px;height:20px;line-height:20px;color:#f0f0f0;font-size:13px;letter-spacing:-0.550px;word-spacing:-0.5px;white-space:pre;">1.0</div>
<svg class="a" style="left:14.0px;top:521px;" width="9" height="9" viewBox="0 0 9 9"><circle cx="4.5" cy="4.5" r="4.1" fill="none" stroke="#777" stroke-width="1.1"/></svg>
<div class="a" style="left:30.0px;top:517.2px;height:20px;line-height:20px;color:#e6e6e6;font-size:13px;letter-spacing:-0.582px;word-spacing:-0.5px;white-space:pre;">Prefix</div>
<div class="a " style="left:177.5px;top:516.7px;width:274.5px;height:17.3px;background:#2a2a2a;border-radius:3px;"></div>
<div class="a" style="left:182.0px;top:516.5px;height:20px;line-height:20px;color:#5a5a5a;font-size:12px;letter-spacing:-0.415px;word-spacing:-0.5px;white-space:pre;">T</div>
<div class="a " style="left:455.5px;top:517.7px;width:15px;height:15px;background:#262626;border-radius:3px;border:1px solid #1c1c1c;box-sizing:border-box;"></div>
<svg class="a" style="left:456.5px;top:518.7px;" width="14" height="14" viewBox="0 0 14 14"><path d="M2 6.5 H11 M6.5 2 V11" stroke="#f0f0f0" stroke-width="1.8"/><path d="M13 10 V13 H10 Z" fill="#6ec9a0"/></svg>
<svg class="a" style="left:14.0px;top:543px;" width="9" height="9" viewBox="0 0 9 9"><circle cx="4.5" cy="4.5" r="4.1" fill="none" stroke="#777" stroke-width="1.1"/></svg>
<div class="a" style="left:30.0px;top:539.2px;height:20px;line-height:20px;color:#e6e6e6;font-size:13px;letter-spacing:-0.565px;word-spacing:-0.5px;white-space:pre;">Suffix</div>
<div class="a " style="left:177.5px;top:538.7px;width:274.5px;height:17.3px;background:#2a2a2a;border-radius:3px;"></div>
<div class="a" style="left:182.0px;top:538.5px;height:20px;line-height:20px;color:#5a5a5a;font-size:12px;letter-spacing:-0.415px;word-spacing:-0.5px;white-space:pre;">T</div>
<div class="a " style="left:455.5px;top:539.7px;width:15px;height:15px;background:#262626;border-radius:3px;border:1px solid #1c1c1c;box-sizing:border-box;"></div>
<svg class="a" style="left:456.5px;top:540.7px;" width="14" height="14" viewBox="0 0 14 14"><path d="M2 6.5 H11 M6.5 2 V11" stroke="#f0f0f0" stroke-width="1.8"/><path d="M13 10 V13 H10 Z" fill="#6ec9a0"/></svg>
<div class="a" style="left:30.0px;top:561.2px;height:20px;line-height:20px;color:#e6e6e6;font-size:13px;letter-spacing:-0.651px;word-spacing:-0.5px;white-space:pre;">Manipulators</div>
<div class="a " style="left:177.5px;top:562.5px;width:93.5px;height:15.5px;background:#2a2a2a;border-radius:3px;"></div>
<svg class="a" style="left:180.5px;top:564.5px;" width="9" height="12" viewBox="0 0 9 12"><path d="M0 1 H9 M0 4.3 H9 M0 7.6 H7 M0 11 H9" stroke="#b0b0b0" stroke-width="0.8"/></svg>
<div class="a" style="left:195.0px;top:561.2px;height:20px;line-height:20px;color:#b8b8b8;font-size:13px;letter-spacing:-0.450px;word-spacing:-0.5px;white-space:pre;">0</div>
<div class="a " style="left:273.5px;top:562.5px;width:15px;height:15px;background:#262626;border-radius:3px;border:1px solid #1c1c1c;box-sizing:border-box;"></div>
<svg class="a" style="left:274.5px;top:563.5px;" width="14" height="14" viewBox="0 0 14 14"><path d="M2 6.5 H11 M6.5 2 V11" stroke="#f0f0f0" stroke-width="1.8"/><path d="M13 10 V13 H10 Z" fill="#6ec9a0"/></svg>
<div class="a " style="left:6px;top:585.5px;width:468px;height:22.5px;background:#383838;border-radius:0 3px 0 0;"></div>
<div class="a " style="left:6px;top:585.5px;width:468px;height:1.3px;background:#b18cff;border-radius:0 3px 0 0;"></div>
<div class="a " style="left:6px;top:585.5px;width:4px;height:22.5px;background:#b18cff;"></div>
<div class="a " style="left:470px;top:585.5px;width:4px;height:22.5px;background:#b18cff;border-radius:0 3px 0 0;"></div>
<svg class="a" style="left:15px;top:595.0px;" width="9" height="6" viewBox="0 0 9 6"><path d="M0.5 0.7 L4.5 4.7 L8.5 0.7" fill="none" stroke="#b0b0b0" stroke-width="1.2"/></svg>
<div class="a " style="left:28px;top:588.2px;width:18px;height:17.5px;background:#2a2a2a;border-radius:3px;"></div>
<svg class="a" style="left:30px;top:592.0px;" width="14" height="10" viewBox="0 0 14 10"><path d="M0.6 5 Q7 -2.4 13.4 5 Q7 12.4 0.6 5 Z" fill="none" stroke="#dcdcdc" stroke-width="1.2"/><circle cx="7" cy="5" r="2.3" fill="none" stroke="#dcdcdc" stroke-width="1.2"/></svg>
<svg class="a" style="left:50.5px;top:593.0px;" width="9" height="9" viewBox="0 0 9 9"><circle cx="4.5" cy="4.5" r="4.1" fill="none" stroke="#6a6a6a" stroke-width="1.1"/></svg>
<svg class="a" style="left:65px;top:589.0px;" width="16" height="16" viewBox="0 0 16 16"><path d="M1.5 1 V15 M14.5 1 V15" stroke="#e0e0e0" stroke-width="1.1"/><path d="M0 1 H4 M6.5 1 H9.5 M12 1 H16 M0 15 H4 M6.5 15 H9.5 M12 15 H16" stroke="#e0e0e0" stroke-width="1.1"/><path d="M4.2 4.8 H11.8 M8 4.8 V12.3" stroke="#f0d860" stroke-width="2"/></svg>
<div class="a" style="left:87.0px;top:587.9px;height:20px;line-height:20px;color:#f0f0f0;font-size:13px;letter-spacing:-0.581px;word-spacing:-0.5px;white-space:pre;">Cavalry</div>
<div class="a " style="left:365.5px;top:588.5px;width:17.5px;height:17px;background:#2a2a2a;border-radius:4px;border:1px solid #1c1c1c;box-sizing:border-box;"></div>
<div class="a " style="left:386.5px;top:588.5px;width:20.5px;height:17px;background:#2a2a2a;border-radius:4px;border:1px solid #1c1c1c;box-sizing:border-box;"></div>
<div class="a " style="left:410px;top:588.5px;width:17.5px;height:17px;background:#2a2a2a;border-radius:4px;border:1px solid #1c1c1c;box-sizing:border-box;"></div>
<div class="a " style="left:430.5px;top:588.5px;width:17.5px;height:17px;background:#2a2a2a;border-radius:4px;border:1px solid #1c1c1c;box-sizing:border-box;"></div>
<div class="a " style="left:450px;top:588.5px;width:17.5px;height:17px;background:#2a2a2a;border-radius:4px;border:1px solid #1c1c1c;box-sizing:border-box;"></div>
<div class="a " style="left:396.3px;top:588.5px;width:1px;height:17px;background:#383838;"></div>
<svg class="a" style="left:367px;top:590.5px;" width="16" height="14" viewBox="0 0 16 14"><path d="M1 3 H7 M1 11 H7 M7 7 H14" stroke="#e8e8e8" stroke-width="2"/><path d="M15 11 V14 H12 Z" fill="#6ec9a0"/></svg>
<svg class="a" style="left:386.5px;top:592.0px;" width="21" height="10" viewBox="0 0 21 10"><path d="M1.8 5 L5.2 1.8 H8 V8.2 H5.2 Z" fill="#e0c050"/><path d="M19.2 5 L15.8 1.8 H13 V8.2 H15.8 Z" fill="#777"/></svg>
<svg class="a" style="left:412px;top:590.0px;" width="14" height="15" viewBox="0 0 14 15"><path d="M4 1 H10 V2.2 H9 V6 L11 8.5 V9.5 H3 V8.5 L5 6 V2.2 H4 Z" fill="#e0e0e0"/><path d="M7 9.5 V14" stroke="#e0e0e0" stroke-width="1.2"/></svg>
<svg class="a" style="left:431.5px;top:589.5px;" width="16" height="15" viewBox="0 0 16 15"><path d="M8.5 4.8 L9.676 7.824 L12.7 9 L9.676 10.176 L8.5 13.2 L7.324 10.176 L4.3 9 L7.324 7.824 Z" fill="#e0e0e0"/><circle cx="3" cy="3" r="1.1" fill="#e0e0e0"/><circle cx="9" cy="2.5" r="1.1" fill="#e0e0e0"/><circle cx="3" cy="9" r="1.1" fill="#e0e0e0"/><path d="M14 11 V14 H11 Z" fill="#6ec9a0"/></svg>
<svg class="a" style="left:452.3px;top:590.7px;" width="13" height="13" viewBox="0 0 13 13"><path d="M2 2 L11 11 M11 2 L2 11" stroke="#e0e0e0" stroke-width="1.2"/></svg>
<div class="a " style="left:6px;top:608px;width:468px;height:22px;background:#333;"></div>
<div class="a " style="left:9px;top:610px;width:78px;height:20px;background:#464646;border-radius:4px 4px 0 0;"></div>
<div class="a" style="left:32.0px;top:609.8px;height:20px;line-height:20px;color:#f4f4f4;font-size:13px;letter-spacing:-1.119px;word-spacing:-0.5px;white-space:pre;">Shape</div>
<div class="a" style="left:94.0px;top:609.8px;height:20px;line-height:20px;color:#cfcfcf;font-size:13px;letter-spacing:-0.588px;word-spacing:-0.5px;white-space:pre;">Background</div>
<div class="a " style="left:164.5px;top:614px;width:1px;height:12px;background:#9a9a9a;"></div>
<div class="a " style="left:241.3px;top:614px;width:1px;height:12px;background:#9a9a9a;"></div>
<div class="a " style="left:318.3px;top:614px;width:1px;height:12px;background:#9a9a9a;"></div>
<div class="a " style="left:395.5px;top:614px;width:1px;height:12px;background:#9a9a9a;"></div>
<div class="a " style="left:170px;top:615.3px;width:10px;height:9.5px;background:#fff;border-radius:1px;"></div>
<div class="a" style="left:198.5px;top:609.8px;height:20px;line-height:20px;color:#cfcfcf;font-size:13px;letter-spacing:-0.277px;word-spacing:-0.5px;white-space:pre;">Fill</div>
<div class="a " style="left:246px;top:615px;width:11px;height:10px;background:#2c2c2c;border-radius:1px;border:1px solid #444;box-sizing:border-box;"></div>
<svg class="a" style="left:246px;top:615px;" width="11" height="10" viewBox="0 0 11 10"><path d="M1 9.5 L10.5 0.5" stroke="#b05050" stroke-width="1.1"/></svg>
<div class="a" style="left:266.5px;top:609.8px;height:20px;line-height:20px;color:#cfcfcf;font-size:13px;letter-spacing:-0.546px;word-spacing:-0.5px;white-space:pre;">Stroke</div>
<div class="a" style="left:340.3px;top:609.8px;height:20px;line-height:20px;color:#cfcfcf;font-size:13px;letter-spacing:-0.852px;word-spacing:-0.5px;white-space:pre;">Masks</div>
<div class="a" style="left:408.2px;top:609.8px;height:20px;line-height:20px;color:#cfcfcf;font-size:13px;letter-spacing:-0.803px;word-spacing:-0.5px;white-space:pre;">Advanced</div>
<div class="a " style="left:6px;top:630px;width:468px;height:394px;background:#383838;"></div>
<svg class="a" style="left:14.3px;top:636px;" width="9" height="9" viewBox="0 0 9 9"><circle cx="4.5" cy="4.5" r="4.1" fill="none" stroke="#777" stroke-width="1.1"/></svg>
<div class="a" style="left:30.0px;top:632.2px;height:20px;line-height:20px;color:#e6e6e6;font-size:13px;letter-spacing:-0.607px;word-spacing:-0.5px;white-space:pre;">Position</div>
<div class="a " style="left:177.5px;top:633px;width:93.5px;height:15.5px;background:#2a2a2a;border-radius:3px;"></div>
<div class="a" style="left:181.5px;top:632.1px;height:20px;line-height:20px;color:#686868;font-size:13px;letter-spacing:-0.450px;word-spacing:-0.5px;white-space:pre;">X</div>
<div class="a" style="left:194.5px;top:632.2px;height:20px;line-height:20px;color:#f0f0f0;font-size:13px;letter-spacing:-0.550px;word-spacing:-0.5px;white-space:pre;">-211.464</div>
<div class="a " style="left:277.2px;top:633px;width:93.5px;height:15.5px;background:#2a2a2a;border-radius:3px;"></div>
<div class="a" style="left:281.2px;top:632.1px;height:20px;line-height:20px;color:#686868;font-size:13px;letter-spacing:-0.450px;word-spacing:-0.5px;white-space:pre;">Y</div>
<div class="a" style="left:294.2px;top:632.2px;height:20px;line-height:20px;color:#f0f0f0;font-size:13px;letter-spacing:-0.550px;word-spacing:-0.5px;white-space:pre;">51.366</div>
<svg class="a" style="left:14.3px;top:658px;" width="9" height="9" viewBox="0 0 9 9"><circle cx="4.5" cy="4.5" r="4.1" fill="none" stroke="#777" stroke-width="1.1"/></svg>
<div class="a" style="left:30.0px;top:654.2px;height:20px;line-height:20px;color:#e6e6e6;font-size:13px;letter-spacing:-0.636px;word-spacing:-0.5px;white-space:pre;">Rotation</div>
<div class="a " style="left:177.5px;top:655px;width:93.5px;height:15.5px;background:#2a2a2a;border-radius:3px;"></div>
<div class="a" style="left:181.5px;top:654.1px;height:20px;line-height:20px;color:#686868;font-size:13px;letter-spacing:-0.450px;word-spacing:-0.5px;white-space:pre;">Z</div>
<div class="a" style="left:194.5px;top:654.2px;height:20px;line-height:20px;color:#f0f0f0;font-size:13px;letter-spacing:-0.550px;word-spacing:-0.5px;white-space:pre;">0.0</div>
<svg class="a" style="left:14.3px;top:680px;" width="9" height="9" viewBox="0 0 9 9"><circle cx="4.5" cy="4.5" r="4.1" fill="none" stroke="#777" stroke-width="1.1"/></svg>
<div class="a" style="left:30.0px;top:676.2px;height:20px;line-height:20px;color:#e6e6e6;font-size:13px;letter-spacing:-0.683px;word-spacing:-0.5px;white-space:pre;">Scale</div>
<div class="a " style="left:177.5px;top:677px;width:93.5px;height:15.5px;background:#2a2a2a;border-radius:3px;"></div>
<div class="a" style="left:181.5px;top:676.1px;height:20px;line-height:20px;color:#686868;font-size:13px;letter-spacing:-0.450px;word-spacing:-0.5px;white-space:pre;">X</div>
<div class="a" style="left:194.5px;top:676.2px;height:20px;line-height:20px;color:#f0f0f0;font-size:13px;letter-spacing:-0.550px;word-spacing:-0.5px;white-space:pre;">1.0</div>
<div class="a " style="left:277.2px;top:677px;width:93.5px;height:15.5px;background:#2a2a2a;border-radius:3px;"></div>
<div class="a" style="left:281.2px;top:676.1px;height:20px;line-height:20px;color:#686868;font-size:13px;letter-spacing:-0.450px;word-spacing:-0.5px;white-space:pre;">Y</div>
<div class="a" style="left:294.2px;top:676.2px;height:20px;line-height:20px;color:#f0f0f0;font-size:13px;letter-spacing:-0.550px;word-spacing:-0.5px;white-space:pre;">1.0</div>
<svg class="a" style="left:14.3px;top:702px;" width="9" height="9" viewBox="0 0 9 9"><circle cx="4.5" cy="4.5" r="4.1" fill="none" stroke="#777" stroke-width="1.1"/></svg>
<div class="a" style="left:30.0px;top:698.2px;height:20px;line-height:20px;color:#e6e6e6;font-size:13px;letter-spacing:-0.835px;word-spacing:-0.5px;white-space:pre;">Skew</div>
<div class="a " style="left:177.5px;top:699px;width:93.5px;height:15.5px;background:#2a2a2a;border-radius:3px;"></div>
<div class="a" style="left:181.5px;top:698.1px;height:20px;line-height:20px;color:#686868;font-size:13px;letter-spacing:-0.450px;word-spacing:-0.5px;white-space:pre;">X</div>
<div class="a" style="left:194.5px;top:698.2px;height:20px;line-height:20px;color:#f0f0f0;font-size:13px;letter-spacing:-0.550px;word-spacing:-0.5px;white-space:pre;">0.0</div>
<div class="a " style="left:277.2px;top:699px;width:93.5px;height:15.5px;background:#2a2a2a;border-radius:3px;"></div>
<div class="a" style="left:281.2px;top:698.1px;height:20px;line-height:20px;color:#686868;font-size:13px;letter-spacing:-0.450px;word-spacing:-0.5px;white-space:pre;">Y</div>
<div class="a" style="left:294.2px;top:698.2px;height:20px;line-height:20px;color:#f0f0f0;font-size:13px;letter-spacing:-0.550px;word-spacing:-0.5px;white-space:pre;">0.0</div>
<svg class="a" style="left:14.3px;top:724px;" width="9" height="9" viewBox="0 0 9 9"><circle cx="4.5" cy="4.5" r="4.1" fill="none" stroke="#777" stroke-width="1.1"/></svg>
<div class="a" style="left:30.0px;top:720.2px;height:20px;line-height:20px;color:#e6e6e6;font-size:13px;letter-spacing:-0.607px;word-spacing:-0.5px;white-space:pre;">Pivot</div>
<div class="a " style="left:177.5px;top:721px;width:93.5px;height:15.5px;background:#2a2a2a;border-radius:3px;"></div>
<div class="a" style="left:181.5px;top:720.1px;height:20px;line-height:20px;color:#686868;font-size:13px;letter-spacing:-0.450px;word-spacing:-0.5px;white-space:pre;">X</div>
<div class="a" style="left:194.5px;top:720.2px;height:20px;line-height:20px;color:#f0f0f0;font-size:13px;letter-spacing:-0.550px;word-spacing:-0.5px;white-space:pre;">0.0</div>
<div class="a " style="left:277.2px;top:721px;width:93.5px;height:15.5px;background:#2a2a2a;border-radius:3px;"></div>
<div class="a" style="left:281.2px;top:720.1px;height:20px;line-height:20px;color:#686868;font-size:13px;letter-spacing:-0.450px;word-spacing:-0.5px;white-space:pre;">Y</div>
<div class="a" style="left:294.2px;top:720.2px;height:20px;line-height:20px;color:#f0f0f0;font-size:13px;letter-spacing:-0.550px;word-spacing:-0.5px;white-space:pre;">0.0</div>
<div class="a " style="left:377.5px;top:677px;width:15.5px;height:15.5px;background:#2a2a2a;border-radius:4px;border:1px solid #1c1c1c;box-sizing:border-box;"></div>
<svg class="a" style="left:381.5px;top:679px;" width="8" height="12" viewBox="0 0 8 12"><path d="M1 4.2 V3.5 Q1 0.8 4 0.8 Q7 0.8 7 3.5 V4.2 M1 7.8 V8.5 Q1 11.2 4 11.2 Q7 11.2 7 8.5 V7.8" fill="none" stroke="#c8c8c8" stroke-width="1.2"/></svg>
<div class="a " style="left:6px;top:741.5px;width:468px;height:1.2px;background:#222;"></div>
<svg class="a" style="left:14.3px;top:751px;" width="9" height="9" viewBox="0 0 9 9"><circle cx="4.5" cy="4.5" r="4.1" fill="none" stroke="#777" stroke-width="1.1"/></svg>
<div class="a" style="left:30.0px;top:747.2px;height:20px;line-height:20px;color:#e6e6e6;font-size:13px;letter-spacing:-0.661px;word-spacing:-0.5px;white-space:pre;">Opacity</div>
<div class="a " style="left:177.5px;top:754px;width:188px;height:4px;background:#e0e0e0;border-radius:2px;"></div>
<svg class="a" style="left:360.5px;top:750.5px;" width="11" height="11" viewBox="0 0 11 11"><circle cx="5.5" cy="5.5" r="5.3" fill="#72cdb2"/><circle cx="5.5" cy="5.5" r="2" fill="#4fa48c"/></svg>
<div class="a " style="left:377px;top:748.5px;width:94px;height:15.5px;background:#2a2a2a;border-radius:3px;"></div>
<div class="a" style="left:381.0px;top:747.0px;height:20px;line-height:20px;color:#686868;font-size:12px;letter-spacing:-0.415px;word-spacing:-0.5px;white-space:pre;">%</div>
<div class="a" style="left:394.5px;top:747.2px;height:20px;line-height:20px;color:#f0f0f0;font-size:13px;letter-spacing:-0.607px;word-spacing:-0.5px;white-space:pre;">100.0</div>
<svg class="a" style="left:14.3px;top:773px;" width="9" height="9" viewBox="0 0 9 9"><circle cx="4.5" cy="4.5" r="4.1" fill="none" stroke="#777" stroke-width="1.1"/></svg>
<div class="a" style="left:30.0px;top:769.2px;height:20px;line-height:20px;color:#e6e6e6;font-size:13px;letter-spacing:-0.739px;word-spacing:-0.5px;white-space:pre;">Blend Mode</div>
<div class="a " style="left:177.5px;top:770.6999999999999px;width:193.5px;height:14.8px;background:#4e4e4e;border-radius:3px;border:1px solid #414141;box-sizing:border-box;"></div>
<div class="a" style="left:180.5px;top:769.4px;height:20px;line-height:20px;color:#f0f0f0;font-size:13px;letter-spacing:-0.500px;word-spacing:-0.5px;white-space:pre;">Normal</div>
<svg class="a" style="left:358.0px;top:775.8px;" width="9" height="6" viewBox="0 0 9 6"><path d="M0.5 0.7 L4.5 4.7 L8.5 0.7" fill="none" stroke="#d0d0d0" stroke-width="1.2"/></svg>
<div class="a" style="left:30.0px;top:791.2px;height:20px;line-height:20px;color:#e6e6e6;font-size:13px;letter-spacing:-0.708px;word-spacing:-0.5px;white-space:pre;">Deformers</div>
<div class="a " style="left:177.5px;top:792.5px;width:93.5px;height:15.5px;background:#2a2a2a;border-radius:3px;"></div>
<svg class="a" style="left:180.5px;top:794.5px;" width="9" height="12" viewBox="0 0 9 12"><path d="M0 1 H9 M0 4.3 H9 M0 7.6 H7 M0 11 H9" stroke="#b0b0b0" stroke-width="0.8"/></svg>
<div class="a" style="left:195.0px;top:791.2px;height:20px;line-height:20px;color:#b8b8b8;font-size:13px;letter-spacing:-0.450px;word-spacing:-0.5px;white-space:pre;">0</div>
<div class="a " style="left:273.5px;top:792.5px;width:15px;height:15px;background:#262626;border-radius:3px;border:1px solid #1c1c1c;box-sizing:border-box;"></div>
<svg class="a" style="left:274.5px;top:793.5px;" width="14" height="14" viewBox="0 0 14 14"><path d="M2 6.5 H11 M6.5 2 V11" stroke="#f0f0f0" stroke-width="1.8"/><path d="M13 10 V13 H10 Z" fill="#6ec9a0"/></svg>
<div class="a" style="left:30.0px;top:813.2px;height:20px;line-height:20px;color:#e6e6e6;font-size:13px;letter-spacing:-0.531px;word-spacing:-0.5px;white-space:pre;">Filters</div>
<div class="a " style="left:177.5px;top:814.5px;width:93.5px;height:15.5px;background:#2a2a2a;border-radius:3px;"></div>
<svg class="a" style="left:180.5px;top:816.5px;" width="9" height="12" viewBox="0 0 9 12"><path d="M0 1 H9 M0 4.3 H9 M0 7.6 H7 M0 11 H9" stroke="#b0b0b0" stroke-width="0.8"/></svg>
<div class="a" style="left:195.0px;top:813.2px;height:20px;line-height:20px;color:#b8b8b8;font-size:13px;letter-spacing:-0.450px;word-spacing:-0.5px;white-space:pre;">0</div>
<div class="a " style="left:273.5px;top:814.5px;width:15px;height:15px;background:#262626;border-radius:3px;border:1px solid #1c1c1c;box-sizing:border-box;"></div>
<svg class="a" style="left:274.5px;top:815.5px;" width="14" height="14" viewBox="0 0 14 14"><path d="M2 6.5 H11 M6.5 2 V11" stroke="#f0f0f0" stroke-width="1.8"/><path d="M13 10 V13 H10 Z" fill="#6ec9a0"/></svg>
<div class="a " style="left:398px;top:792px;width:16.5px;height:16.5px;background:#2a2a2a;border-radius:4px;border:1px solid #1c1c1c;box-sizing:border-box;"></div>
<div class="a " style="left:416px;top:792px;width:16.5px;height:16.5px;background:#2a2a2a;border-radius:4px;border:1px solid #1c1c1c;box-sizing:border-box;"></div>
<div class="a " style="left:435px;top:792px;width:16.5px;height:16.5px;background:#2a2a2a;border-radius:4px;border:1px solid #1c1c1c;box-sizing:border-box;"></div>
<div class="a " style="left:455px;top:792px;width:16.5px;height:16.5px;background:#2a2a2a;border-radius:4px;border:1px solid #1c1c1c;box-sizing:border-box;"></div>
<svg class="a" style="left:400px;top:794px;" width="13" height="13" viewBox="0 0 13 13"><path d="M0.5 2.5 H12 M0.5 6.3 H12 M0.5 10 H12" stroke="#9fe08a" stroke-width="2"/></svg>
<svg class="a" style="left:418px;top:794px;" width="13" height="13" viewBox="0 0 13 13"><path d="M0.5 7 C2 1 4.5 1 6.3 6.5 S10.5 12 12.3 6" fill="none" stroke="#9fe08a" stroke-width="1.5"/><circle cx="1.8" cy="6.5" r="1.6" fill="#9fe08a"/><circle cx="11" cy="7" r="1.6" fill="#9fe08a"/></svg>
<svg class="a" style="left:437px;top:794px;" width="13" height="13" viewBox="0 0 13 13"><path d="M2 1.5 L11.5 6 L2 11.5 Z" fill="none" stroke="#7ed08a" stroke-width="1.4"/><path d="M3.5 4 L8 6.2 L3.5 9 Z" fill="#7ed08a"/></svg>
<div class="a " style="left:452.5px;top:792px;width:1px;height:17px;background:#555;"></div>
<svg class="a" style="left:457px;top:794px;" width="13" height="13" viewBox="0 0 13 13"><path d="M1 1 V12 H12" fill="none" stroke="#d0d0d0" stroke-width="1.3"/><path d="M3 10 L9 3 V8" fill="none" stroke="#d0d0d0" stroke-width="1.1"/><path d="M13 9.5 V12.8 H9.7 Z" fill="#6ec9a0"/></svg>
<svg class="a" style="left:14.3px;top:839px;" width="9" height="9" viewBox="0 0 9 9"><circle cx="4.5" cy="4.5" r="4.1" fill="none" stroke="#777" stroke-width="1.1"/></svg>
<div class="a" style="left:30.0px;top:835.2px;height:20px;line-height:20px;color:#e6e6e6;font-size:13px;letter-spacing:-0.637px;word-spacing:-0.5px;white-space:pre;">Motion Blur</div>
<div class="a " style="left:177.5px;top:836.6999999999999px;width:193.5px;height:14.8px;background:#4e4e4e;border-radius:3px;border:1px solid #414141;box-sizing:border-box;"></div>
<div class="a" style="left:180.5px;top:835.4px;height:20px;line-height:20px;color:#f0f0f0;font-size:13px;letter-spacing:-0.500px;word-spacing:-0.5px;white-space:pre;">None</div>
<svg class="a" style="left:358.0px;top:841.8px;" width="9" height="6" viewBox="0 0 9 6"><path d="M0.5 0.7 L4.5 4.7 L8.5 0.7" fill="none" stroke="#d0d0d0" stroke-width="1.2"/></svg>
<div class="a " style="left:6px;top:857px;width:468px;height:1.2px;background:#222;"></div>
<div class="a " style="left:8.5px;top:860px;width:464px;height:23px;background:#4a4a4a;border-radius:3px 3px 0 0;"></div>
<svg class="a" style="left:14.3px;top:866px;" width="9" height="9" viewBox="0 0 9 9"><circle cx="4.5" cy="4.5" r="4.1" fill="none" stroke="#777" stroke-width="1.1"/></svg>
<div class="a" style="left:30.0px;top:862.2px;height:20px;line-height:20px;color:#e6e6e6;font-size:13px;letter-spacing:-0.594px;word-spacing:-0.5px;white-space:pre;">String</div>
<div class="a " style="left:169px;top:863px;width:21px;height:16.5px;background:#2a2a2a;border-radius:3px;"></div>
<div class="a " style="left:179.3px;top:863px;width:1px;height:16.5px;background:#4a4a4a;"></div>
<svg class="a" style="left:169.2px;top:866px;" width="21" height="10" viewBox="0 0 21 10"><path d="M1.8 5 L5.2 1.8 H8 V8.2 H5.2 Z" fill="#e0c050"/><path d="M19.2 5 L15.8 1.8 H13 V8.2 H15.8 Z" fill="#777"/></svg>
<div class="a " style="left:193px;top:862.5px;width:78px;height:18px;background:#3c3c3c;border-radius:4px;border:1px solid #2c2c2c;box-sizing:border-box;"></div>
<div class="a" style="left:213.5px;top:862.2px;height:20px;line-height:20px;color:#b4b4b4;font-size:13px;letter-spacing:-0.500px;word-spacing:-0.5px;white-space:pre;">Generator</div>
<svg class="a" style="left:198.5px;top:865.5px;" width="13" height="13" viewBox="0 0 13 13"><path d="M1 6 H11 M6 1 V11" stroke="#f0f0f0" stroke-width="1.6"/><path d="M13 10 V13 H10 Z" fill="#f0f0f0"/></svg>
<div class="a " style="left:273.5px;top:862.5px;width:77.5px;height:18px;background:#3c3c3c;border-radius:4px;border:1px solid #2c2c2c;box-sizing:border-box;"></div>
<div class="a" style="left:295.0px;top:862.2px;height:20px;line-height:20px;color:#b4b4b4;font-size:13px;letter-spacing:-0.500px;word-spacing:-0.5px;white-space:pre;">OpenType</div>
<svg class="a" style="left:279px;top:866px;" width="10" height="12" viewBox="0 0 10 12"><ellipse cx="5" cy="6" rx="3.6" ry="4.8" fill="none" stroke="#b8b8b8" stroke-width="1.6" transform="rotate(12 5 6)"/></svg>
<div class="a " style="left:353.5px;top:862.5px;width:55px;height:18px;background:#3c3c3c;border-radius:4px;border:1px solid #2c2c2c;box-sizing:border-box;"></div>
<div class="a" style="left:376.0px;top:862.2px;height:20px;line-height:20px;color:#b4b4b4;font-size:13px;letter-spacing:-0.500px;word-spacing:-0.5px;white-space:pre;">Reset</div>
<svg class="a" style="left:358.5px;top:866px;" width="12" height="12" viewBox="0 0 12 12"><path d="M2.6 4 A4.4 4.4 0 1 1 2 8.2" fill="none" stroke="#b8b8b8" stroke-width="1.4"/><path d="M0.5 1.2 V5.2 H4.5" fill="none" stroke="#b8b8b8" stroke-width="1.4"/></svg>
<div class="a " style="left:410.5px;top:862.5px;width:61px;height:18px;background:#262626;border-radius:4px;border:1px solid #707070;box-sizing:border-box;"></div>
<div class="a" style="left:432.0px;top:862.2px;height:20px;line-height:20px;color:#f0f0f0;font-size:13px;letter-spacing:-0.500px;word-spacing:-0.5px;white-space:pre;">Glyphs</div>
<svg class="a" style="left:416px;top:866px;" width="12" height="11" viewBox="0 0 12 11"><path d="M6 1 L11 10 H1 Z" fill="none" stroke="#f0f0f0" stroke-width="1.2"/></svg>
<div class="a " style="left:8.5px;top:883px;width:21px;height:63px;background:#4a4a4a;border-radius:0 0 0 3px;"></div>
<div class="a " style="left:29.5px;top:884px;width:442.5px;height:62px;background:#222;"></div>
<div class="a" style="left:36.0px;top:886.0px;height:20px;line-height:20px;color:#4e4e4e;font-size:12px;letter-spacing:-0.415px;word-spacing:-0.5px;white-space:pre;">T</div>
<div class="a" style="left:49.0px;top:886.2px;height:20px;line-height:20px;color:#d9c36a;font-size:13px;letter-spacing:-0.384px;word-spacing:-0.5px;white-space:pre;">00000.000</div>
<svg class="a" style="left:14.3px;top:954px;" width="9" height="9" viewBox="0 0 9 9"><circle cx="4.5" cy="4.5" r="4.1" fill="none" stroke="#777" stroke-width="1.1"/></svg>
<div class="a" style="left:30.0px;top:950.2px;height:20px;line-height:20px;color:#e6e6e6;font-size:13px;letter-spacing:-0.683px;word-spacing:-0.5px;white-space:pre;">Font</div>
<div class="a " style="left:177.5px;top:951px;width:191px;height:17px;background:#2a2a2a;border-radius:3px;"></div>
<div class="a" style="left:181.5px;top:950.2px;height:20px;line-height:20px;color:#f0f0f0;font-size:13px;letter-spacing:-0.313px;word-spacing:-0.5px;white-space:pre;">Montserrat</div>
<svg class="a" style="left:356px;top:957px;" width="9" height="6" viewBox="0 0 9 6"><path d="M0.5 0.7 L4.5 4.7 L8.5 0.7" fill="none" stroke="#d0d0d0" stroke-width="1.2"/></svg>
<div class="a " style="left:371.5px;top:951px;width:100px;height:17px;background:#2a2a2a;border-radius:3px;"></div>
<div class="a" style="left:375.5px;top:950.2px;height:20px;line-height:20px;color:#f0f0f0;font-size:13px;letter-spacing:-0.718px;word-spacing:-0.5px;white-space:pre;">Regular</div>
<svg class="a" style="left:458px;top:957px;" width="9" height="6" viewBox="0 0 9 6"><path d="M0.5 0.7 L4.5 4.7 L8.5 0.7" fill="none" stroke="#d0d0d0" stroke-width="1.2"/></svg>
<svg class="a" style="left:14.3px;top:976px;" width="9" height="9" viewBox="0 0 9 9"><circle cx="4.5" cy="4.5" r="4.1" fill="none" stroke="#777" stroke-width="1.1"/></svg>
<div class="a" style="left:30.0px;top:972.2px;height:20px;line-height:20px;color:#e6e6e6;font-size:13px;letter-spacing:-0.692px;word-spacing:-0.5px;white-space:pre;">Typeface</div>
<div class="a " style="left:177.5px;top:972px;width:294px;height:18.7px;background:#2e2e2e;border-radius:3px;"></div>
<div class="a" style="left:182.0px;top:972.0px;height:20px;line-height:20px;color:#555;font-size:12px;letter-spacing:-0.415px;word-spacing:-0.5px;white-space:pre;">C</div>
<div class="a" style="left:194.5px;top:972.2px;height:20px;line-height:20px;color:#7a7a7a;font-size:13px;letter-spacing:-0.577px;word-spacing:-0.5px;white-space:pre;">No Connection</div>
<svg class="a" style="left:14.3px;top:998px;" width="9" height="9" viewBox="0 0 9 9"><circle cx="4.5" cy="4.5" r="4.1" fill="none" stroke="#777" stroke-width="1.1"/></svg>
<div class="a" style="left:30.0px;top:994.2px;height:20px;line-height:20px;color:#e6e6e6;font-size:13px;letter-spacing:-0.652px;word-spacing:-0.5px;white-space:pre;">Font Size</div>
<div class="a " style="left:177.5px;top:995.5px;width:93.5px;height:15.5px;background:#2a2a2a;border-radius:3px;"></div>
<div class="a" style="left:182.0px;top:994.0px;height:20px;line-height:20px;color:#7a7a7a;font-size:12px;letter-spacing:-0.415px;word-spacing:-0.5px;white-space:pre;">#</div>
<div class="a" style="left:194.5px;top:994.2px;height:20px;line-height:20px;color:#f0f0f0;font-size:13px;letter-spacing:-0.550px;word-spacing:-0.5px;white-space:pre;">72.0</div>
<div class="a" style="left:6px;top:1015px;width:468px;height:9px;overflow:hidden">
<div class="a" style="left:24px;top:0.2px;font-size:13px;line-height:20px;color:#e6e6e6;letter-spacing:-0.5px">Style</div>
<div class="a" style="left:171px;top:2px;width:17.5px;height:17px;background:#2a2a2a;border:1px solid #1c1c1c;border-radius:4px;color:#ddd;font-size:11px;line-height:15px;text-align:center">U</div>
<div class="a" style="left:191px;top:2px;width:17.5px;height:17px;background:#2a2a2a;border:1px solid #1c1c1c;border-radius:4px;color:#ddd;font-size:11px;line-height:15px;text-align:center">S</div>
<div class="a" style="left:211px;top:2px;width:17.5px;height:17px;background:#2a2a2a;border:1px solid #1c1c1c;border-radius:4px;color:#ddd;font-size:11px;line-height:15px;text-align:center">T</div>
<div class="a" style="left:231px;top:2px;width:17.5px;height:17px;background:#2a2a2a;border:1px solid #1c1c1c;border-radius:4px;color:#ddd;font-size:11px;line-height:15px;text-align:center">T</div>
<div class="a" style="left:252px;top:2px;width:17.5px;height:17px;background:#2a2a2a;border:1px solid #1c1c1c;border-radius:4px;color:#ddd;font-size:11px;line-height:15px;text-align:center">✱</div>
</div>
<div class="a " style="left:0px;top:1024px;width:488px;height:6px;background:#1b1b1b;"></div>
<svg class="a" width="0" height="0" style="left:0;top:0"><defs><linearGradient id="tg" gradientUnits="userSpaceOnUse" x1="0" y1="2" x2="0" y2="19"><stop offset="0" stop-color="#f4f4f4"/><stop offset="1" stop-color="#bcbcbc"/></linearGradient></defs></svg>
<div class="a " style="left:494px;top:85.2px;width:30px;height:494.6px;background:#444;"></div>
<div class="a " style="left:503px;top:89px;width:2.2px;height:2.2px;background:#858585;"></div>
<div class="a " style="left:508px;top:89px;width:2.2px;height:2.2px;background:#858585;"></div>
<div class="a " style="left:513px;top:89px;width:2.2px;height:2.2px;background:#858585;"></div>
<div class="a " style="left:495px;top:96px;width:28px;height:28px;background:#141414;border-radius:4px;border:1px solid #4a4a4a;box-sizing:border-box;"></div>
<svg class="a" style="left:499px;top:99px;" width="21" height="21" viewBox="0 0 21 21"><path d="M5.2 0.6 V17.6 L8.5 14.8 L11 19.8 L14.3 18.2 L12 13.1 L17 12.6 Z" fill="none" stroke="#2ecc71" stroke-width="1.3" stroke-linejoin="miter"/></svg>
<svg class="a" style="left:499px;top:129px;" width="21" height="21" viewBox="0 0 21 21"><path d="M5 1 L19.4 13.3 L10.4 13.8 L5 21 Z" fill="url(#tg)"/></svg>
<svg class="a" style="left:499px;top:159px;" width="21" height="21" viewBox="0 0 21 21"><path d="M2 2 L12.5 5 L16 12 L12 16 L5 12.5 Z" fill="url(#tg)"/><path d="M2 2 L9 9" stroke="#444" stroke-width="1.2"/><circle cx="9.3" cy="9.3" r="1.5" fill="#444"/><path d="M13.3 17.3 L17.3 13.3 L19 15 L15 19 Z" fill="url(#tg)"/></svg>
<svg class="a" style="left:499px;top:189px;" width="21" height="21" viewBox="0 0 21 21"><path d="M3.5 15 L14 4.5 L16.5 7 L6 17.5 Z" fill="url(#tg)"/><path d="M15 3.5 L16 2.5 Q17.5 1.5 18.7 2.7 Q19.5 4 18.5 5 L17.5 6 Z" fill="url(#tg)"/><path d="M2.7 16 L5 18.3 L1.5 19.5 Z" fill="url(#tg)"/></svg>
<svg class="a" style="left:499px;top:219px;" width="21" height="21" viewBox="0 0 21 21"><rect x="0" y="6.2" width="12.6" height="10.5" rx="1.5" fill="url(#tg)"/><rect x="2" y="4" width="7.5" height="1.4" fill="url(#tg)"/><path d="M14 10.5 L20 6.8 V16 L14 12.7 Z" fill="url(#tg)"/><circle cx="3.3" cy="9" r="1.1" fill="#444"/></svg>
<svg class="a" style="left:499px;top:249px;" width="21" height="21" viewBox="0 0 21 21"><path d="M2.5 19 L18 3.5" stroke="url(#tg)" stroke-width="1.2"/></svg>
<svg class="a" style="left:499px;top:279px;" width="21" height="21" viewBox="0 0 21 21"><path d="M3 3.2 H17.5 V6.4 H12 V19 H8.5 V6.4 H3 Z" fill="url(#tg)"/></svg>
<svg class="a" style="left:499px;top:309px;" width="21" height="21" viewBox="0 0 21 21"><path d="M2 2.9 L9.8 9.2 L5.5 9.8 L2.2 13.7 Z" fill="url(#tg)"/><path d="M7.2 3.5 L13.6 2.9 M15.6 5.8 L17.4 16.9 M4.9 18.6 H15.9 M2.2 15.1 L2 17.4" fill="none" stroke="url(#tg)" stroke-width="1"/><rect x="13.9" y="1.8" width="2.3" height="2.3" fill="url(#tg)"/><rect x="16.8" y="17.5" width="2.3" height="2.3" fill="url(#tg)"/><rect x="0.9" y="17.5" width="2.3" height="2.3" fill="url(#tg)"/></svg>
<svg class="a" style="left:499px;top:339px;" width="21" height="21" viewBox="0 0 21 21"><rect x="3.2" y="3.8" width="14.3" height="14.3" fill="url(#tg)"/></svg>
<svg class="a" style="left:499px;top:369px;" width="21" height="21" viewBox="0 0 21 21"><circle cx="10.3" cy="10.3" r="8.2" fill="url(#tg)"/></svg>
<svg class="a" style="left:499px;top:399px;" width="21" height="21" viewBox="0 0 21 21"><path d="M10.3 1.5 L19 8 L15.8 18 H4.8 L1.6 8 Z" fill="url(#tg)"/></svg>
<svg class="a" style="left:499px;top:429px;" width="21" height="21" viewBox="0 0 21 21"><path d="M10.3 1.2 L12.7 7.6 L19.5 7.9 L14.2 12.1 L16 18.7 L10.3 15 L4.6 18.7 L6.4 12.1 L1.1 7.9 L7.9 7.6 Z" fill="url(#tg)"/></svg>
<svg class="a" style="left:499px;top:459px;" width="21" height="21" viewBox="0 0 21 21"><path d="M16.5 10.9 A6.5 6.5 0 1 0 10 17.4" fill="none" stroke="url(#tg)" stroke-width="3.3"/></svg>
<svg class="a" style="left:499px;top:489px;" width="21" height="21" viewBox="0 0 21 21"><path d="M10.3 2 Q11.5 9.2 18.6 10.4 Q11.5 11.6 10.3 18.8 Q9.1 11.6 2 10.4 Q9.1 9.2 10.3 2 Z" fill="url(#tg)" stroke="url(#tg)" stroke-width="1.2"/></svg>
<svg class="a" style="left:499px;top:519px;" width="21" height="21" viewBox="0 0 21 21"><rect x="8.83" y="2.31" width="2.94" height="3.84" rx="0.51" fill="url(#tg)" transform="rotate(0 10.3 10.5)"/><rect x="8.83" y="2.31" width="2.94" height="3.84" rx="0.51" fill="url(#tg)" transform="rotate(45 10.3 10.5)"/><rect x="8.83" y="2.31" width="2.94" height="3.84" rx="0.51" fill="url(#tg)" transform="rotate(90 10.3 10.5)"/><rect x="8.83" y="2.31" width="2.94" height="3.84" rx="0.51" fill="url(#tg)" transform="rotate(135 10.3 10.5)"/><rect x="8.83" y="2.31" width="2.94" height="3.84" rx="0.51" fill="url(#tg)" transform="rotate(180 10.3 10.5)"/><rect x="8.83" y="2.31" width="2.94" height="3.84" rx="0.51" fill="url(#tg)" transform="rotate(225 10.3 10.5)"/><rect x="8.83" y="2.31" width="2.94" height="3.84" rx="0.51" fill="url(#tg)" transform="rotate(270 10.3 10.5)"/><rect x="8.83" y="2.31" width="2.94" height="3.84" rx="0.51" fill="url(#tg)" transform="rotate(315 10.3 10.5)"/><circle cx="10.3" cy="10.5" r="6.4" fill="url(#tg)"/><circle cx="10.3" cy="10.5" r="2.69" fill="#444"/></svg>
<svg class="a" style="left:502px;top:563px;" width="15" height="13" viewBox="0 0 15 13"><path d="M1.5 1.5 L6.5 6.5 L1.5 11.5 M8 1.5 L13 6.5 L8 11.5" fill="none" stroke="#b8b8b8" stroke-width="1.3"/></svg>
<div class="a " style="left:530px;top:85.2px;width:87px;height:21.8px;background:#464646;border-radius:5px 5px 0 0;"></div>
<div class="a" style="left:535.5px;top:87.0px;height:20px;line-height:20px;color:#e6e6e6;font-size:13px;letter-spacing:-0.469px;word-spacing:-0.5px;white-space:pre;">Composition 3</div>
<div class="a " style="left:530px;top:107px;width:1057px;height:451px;background:#000;"></div>
<div class="a " style="left:693.5px;top:127.1px;width:728.95px;height:409.65px;background:#00aeff;"></div>
<div class="a " style="left:1012.6px;top:286.6px;width:90.6px;height:90.6px;background:#3ce38e;border-radius:50%;"></div>
<div class="a" style="left:978.2px;top:320.1px;height:20px;line-height:20px;color:#fff;font-size:28px;letter-spacing:0.383px;word-spacing:-0.5px;white-space:pre;transform:scaleX(1.18);transform-origin:0 50%;-webkit-text-stroke:0.45px #fff;">00000.000</div>
<div class="a" style="left:569.7px;top:457.7px;height:20px;line-height:20px;color:#f0f0f0;font-size:12.5px;letter-spacing:-0.536px;word-spacing:-0.5px;white-space:pre;">Hold S</div>
<div class="a" style="left:605.5px;top:457.7px;height:20px;line-height:20px;color:#585858;font-size:12.5px;letter-spacing:-0.262px;word-spacing:-0.5px;white-space:pre;">Direct Layer Selection</div>
<div class="a" style="left:569.7px;top:471.75px;height:20px;line-height:20px;color:#f0f0f0;font-size:12.5px;letter-spacing:-0.968px;word-spacing:-0.5px;white-space:pre;">Space</div>
<div class="a" style="left:603.0px;top:471.75px;height:20px;line-height:20px;color:#585858;font-size:12.5px;letter-spacing:-0.347px;word-spacing:-0.5px;white-space:pre;">Play/ Stop</div>
<div class="a" style="left:569.7px;top:485.8px;height:20px;line-height:20px;color:#f0f0f0;font-size:12.5px;letter-spacing:-0.498px;word-spacing:-0.5px;white-space:pre;">Space + click + drag</div>
<div class="a" style="left:674.0px;top:485.8px;height:20px;line-height:20px;color:#585858;font-size:12.5px;letter-spacing:-1.080px;word-spacing:-0.5px;white-space:pre;">Pan</div>
<div class="a" style="left:569.7px;top:499.85px;height:20px;line-height:20px;color:#f0f0f0;font-size:12.5px;letter-spacing:-0.244px;word-spacing:-0.5px;white-space:pre;">Alt + click + drag</div>
<div class="a" style="left:658.6px;top:499.85px;height:20px;line-height:20px;color:#585858;font-size:12.5px;letter-spacing:-0.149px;word-spacing:-0.5px;white-space:pre;">Move Pivot Point</div>
<div class="a" style="left:569.7px;top:513.9px;height:20px;line-height:20px;color:#f0f0f0;font-size:12.5px;letter-spacing:-0.142px;word-spacing:-0.5px;white-space:pre;">Shift</div>
<div class="a" style="left:596.7px;top:513.9px;height:20px;line-height:20px;color:#585858;font-size:12.5px;letter-spacing:-0.588px;word-spacing:-0.5px;white-space:pre;">Enable Snapping</div>
<div class="a" style="left:693.5px;top:127.1px;width:728.95px;height:409.65px;overflow:hidden">
<div class="a" style="left:-88.0px;top:330.6px;height:20px;line-height:20px;color:#6a72b4;font-size:12.5px;letter-spacing:-0.262px;word-spacing:-0.5px;white-space:pre;">Direct Layer Selection</div>
<div class="a" style="left:-90.5px;top:344.65px;height:20px;line-height:20px;color:#6a72b4;font-size:12.5px;letter-spacing:-0.347px;word-spacing:-0.5px;white-space:pre;">Play/ Stop</div>
<div class="a" style="left:-19.5px;top:358.70000000000005px;height:20px;line-height:20px;color:#6a72b4;font-size:12.5px;letter-spacing:-1.080px;word-spacing:-0.5px;white-space:pre;">Pan</div>
<div class="a" style="left:-34.9px;top:372.75px;height:20px;line-height:20px;color:#6a72b4;font-size:12.5px;letter-spacing:-0.149px;word-spacing:-0.5px;white-space:pre;">Move Pivot Point</div>
<div class="a" style="left:-96.8px;top:386.79999999999995px;height:20px;line-height:20px;color:#6a72b4;font-size:12.5px;letter-spacing:-0.588px;word-spacing:-0.5px;white-space:pre;">Enable Snapping</div>
</div>
<div class="a" style="left:997.6px;top:533.5px;height:20px;line-height:20px;color:#f0f0f0;font-size:13px;letter-spacing:-0.272px;word-spacing:-0.5px;white-space:pre;">Viewport Quality: High</div>
<div class="a " style="left:530px;top:558px;width:1057px;height:22px;background:#444;"></div>
<div class="a " style="left:535px;top:561px;width:78px;height:16px;background:#2a2a2a;border-radius:3px;"></div>
<div class="a" style="left:538.5px;top:559.8px;height:20px;line-height:20px;color:#f0f0f0;font-size:13px;letter-spacing:-1.173px;word-spacing:-0.5px;white-space:pre;">38%</div>
<svg class="a" style="left:601px;top:566.5px;" width="9" height="6" viewBox="0 0 9 6"><path d="M0.5 0.7 L4.5 4.7 L8.5 0.7" fill="none" stroke="#d0d0d0" stroke-width="1.2"/></svg>
<div class="a " style="left:866.3px;top:559.5px;width:99px;height:19px;background:#2c2c2c;border-radius:4px;border:1px solid #222;box-sizing:border-box;"></div>
<div class="a " style="left:885.6px;top:559.5px;width:1px;height:19px;background:#3c3c3c;"></div>
<div class="a " style="left:905.9px;top:559.5px;width:1px;height:19px;background:#3c3c3c;"></div>
<div class="a " style="left:925.8px;top:559.5px;width:1px;height:19px;background:#3c3c3c;"></div>
<div class="a " style="left:946.0px;top:559.5px;width:1px;height:19px;background:#3c3c3c;"></div>
<svg class="a" style="left:866px;top:559px;" width="100" height="20" viewBox="0 0 100 20"><rect x="3.8" y="5" width="2.2" height="10" fill="#c8c8c8"/><path d="M15.3 5 V15 L7 10 Z" fill="#c8c8c8"/><path d="M33 5 V15 L24 10 Z" fill="#c8c8c8"/><rect x="34" y="5" width="2.2" height="10" fill="#c8c8c8"/><path d="M45 5 V15 L54 10 Z" fill="#c8c8c8"/><rect x="64" y="5" width="2.2" height="10" fill="#c8c8c8"/><path d="M67.3 5 V15 L76.3 10 Z" fill="#c8c8c8"/><path d="M85 5 V15 L94 10 Z" fill="#c8c8c8"/><rect x="95" y="5" width="2.2" height="10" fill="#c8c8c8"/></svg>
<div class="a " style="left:971.3px;top:559.5px;width:19.3px;height:19px;background:#2c2c2c;border-radius:4px;border:1px solid #222;box-sizing:border-box;"></div>
<svg class="a" style="left:971.3px;top:559.5px;" width="20" height="19" viewBox="0 0 20 19"><path d="M9 7 H4.5 Q3.5 7 3.5 8 V12.5 Q3.5 13.5 4.5 13.5 H15.5 Q16.5 13.5 16.5 12.5 V8.5" fill="none" stroke="#c8c8c8" stroke-width="1.4"/><path d="M10.5 3.5 L16 6.5 L10.5 9.5 Z" fill="#c8c8c8"/></svg>
<div class="a " style="left:1232px;top:560.3px;width:37px;height:17.4px;background:#2a2a2a;border-radius:4px;"></div>
<svg class="a" style="left:1233.5px;top:564.5px;" width="14" height="9" viewBox="0 0 14 9"><path d="M0.5 4.5 L4 0.5 H13.5 V8.5 H4 Z" fill="#c8c8c8"/><circle cx="4.5" cy="4.5" r="1.3" fill="#2a2a2a"/></svg>
<div class="a" style="left:1258.0px;top:559.8px;height:20px;line-height:20px;color:#8a8a8a;font-size:13px;letter-spacing:-0.450px;word-spacing:-0.5px;white-space:pre;">0</div>
<div class="a " style="left:1272px;top:560px;width:31px;height:18px;background:#2c2c2c;border-radius:4px;border:1px solid #222;box-sizing:border-box;"></div>
<div class="a " style="left:1291px;top:560px;width:1px;height:18px;background:#3c3c3c;"></div>
<svg class="a" style="left:1293.5px;top:565.5px;" width="6" height="7" viewBox="0 0 6 7"><path d="M0.6 0.6 L5 3.5 L0.6 6.4 Z" fill="none" stroke="#8a8a8a" stroke-width="0.9"/></svg>
<svg class="a" style="left:1275px;top:562.5px;" width="14" height="13" viewBox="0 0 14 13"><path d="M0.5 4.5 H3 L7 1 V12 L3 8.5 H0.5 Z" fill="#3ecf7d"/><path d="M8.8 4 Q10.2 6.5 8.8 9 M10.7 2.3 Q13 6.5 10.7 10.7" fill="none" stroke="#3ecf7d" stroke-width="1.2"/></svg>
<div class="a " style="left:1307px;top:560px;width:31px;height:18px;background:#2c2c2c;border-radius:4px;border:1px solid #222;box-sizing:border-box;"></div>
<div class="a " style="left:1326px;top:560px;width:1px;height:18px;background:#3c3c3c;"></div>
<svg class="a" style="left:1328.5px;top:565.5px;" width="6" height="7" viewBox="0 0 6 7"><path d="M0.6 0.6 L5 3.5 L0.6 6.4 Z" fill="none" stroke="#8a8a8a" stroke-width="0.9"/></svg>
<svg class="a" style="left:1308.5px;top:561.5px;" width="14" height="13" viewBox="0 0 14 13"><g transform="scale(1.3)"><path d="M3.4 6.1 L6.24 3.24 A3.2 3.2 0 0 1 10.76 7.76 L7.9 10.6" fill="none" stroke="#c8c8c8" stroke-width="2.2"/></g></svg>
<div class="a " style="left:1342px;top:560px;width:31px;height:18px;background:#2c2c2c;border-radius:4px;border:1px solid #222;box-sizing:border-box;"></div>
<div class="a " style="left:1361px;top:560px;width:1px;height:18px;background:#3c3c3c;"></div>
<svg class="a" style="left:1363.5px;top:565.5px;" width="6" height="7" viewBox="0 0 6 7"><path d="M0.6 0.6 L5 3.5 L0.6 6.4 Z" fill="none" stroke="#8a8a8a" stroke-width="0.9"/></svg>
<svg class="a" style="left:1345px;top:562.5px;" width="14" height="13" viewBox="0 0 14 13"><path d="M4.5 0 V13 M9.5 0 V13 M0 4 H14 M0 9 H14" stroke="#c8c8c8" stroke-width="1.3"/></svg>
<div class="a " style="left:1377.3px;top:560px;width:19px;height:18px;background:#2c2c2c;border-radius:4px;border:1px solid #222;box-sizing:border-box;"></div>
<svg class="a" style="left:1379.5px;top:563px;" width="15" height="12" viewBox="0 0 15 12"><rect x="0" y="0.5" width="3" height="3.5" fill="#3ecf7d"/><rect x="0" y="6" width="3" height="5.5" fill="#3ecf7d"/><rect x="4.5" y="0.8" width="9.5" height="4" fill="none" stroke="#3ecf7d" stroke-width="1.5"/><rect x="4" y="7.5" width="10.5" height="4" fill="#3ecf7d"/></svg>
<div class="a " style="left:1400.5px;top:560px;width:19px;height:18px;background:#2c2c2c;border-radius:4px;border:1px solid #222;box-sizing:border-box;"></div>
<svg class="a" style="left:1402.5px;top:564.5px;" width="16" height="9" viewBox="0 0 16 9"><path d="M0.5 0 L4 4.5 L0.5 9 H2.8 L6.3 4.5 L2.8 0 Z M5.5 0 L9 4.5 L5.5 9 H7.8 L11.3 4.5 L7.8 0 Z M10.5 0 L14 4.5 L10.5 9 H12.8 L16.3 4.5 L12.8 0 Z" fill="#c8c8c8"/></svg>
<div class="a " style="left:1423px;top:560px;width:31px;height:18px;background:#2c2c2c;border-radius:4px;border:1px solid #222;box-sizing:border-box;"></div>
<div class="a " style="left:1442px;top:560px;width:1px;height:18px;background:#3c3c3c;"></div>
<svg class="a" style="left:1444.5px;top:565.5px;" width="6" height="7" viewBox="0 0 6 7"><path d="M0.6 0.6 L5 3.5 L0.6 6.4 Z" fill="none" stroke="#8a8a8a" stroke-width="0.9"/></svg>
<svg class="a" style="left:1425.5px;top:563px;" width="15" height="12" viewBox="0 0 15 12"><rect x="0.7" y="0.7" width="13.6" height="9.5" fill="none" stroke="#c8c8c8" stroke-width="1.4"/><rect x="0" y="9.5" width="15" height="2.5" fill="#c8c8c8"/></svg>
<div class="a " style="left:1458px;top:560px;width:31px;height:18px;background:#2c2c2c;border-radius:4px;border:1px solid #222;box-sizing:border-box;"></div>
<div class="a " style="left:1477px;top:560px;width:1px;height:18px;background:#3c3c3c;"></div>
<svg class="a" style="left:1479.5px;top:565.5px;" width="6" height="7" viewBox="0 0 6 7"><path d="M0.6 0.6 L5 3.5 L0.6 6.4 Z" fill="none" stroke="#8a8a8a" stroke-width="0.9"/></svg>
<svg class="a" style="left:1460.5px;top:562.5px;" width="15" height="13" viewBox="0 0 15 13"><rect x="0.6" y="0.6" width="8" height="5" fill="none" stroke="#9a9a9a" stroke-width="1.1"/><path d="M10.8 3.5 V8 H3 M13 6 V10.2 H5.5 M15 8.5 V12.5 H8" fill="none" stroke="#9a9a9a" stroke-width="1.1"/></svg>
<div class="a " style="left:1493px;top:560px;width:31px;height:18px;background:#2c2c2c;border-radius:4px;border:1px solid #222;box-sizing:border-box;"></div>
<div class="a " style="left:1512px;top:560px;width:1px;height:18px;background:#3c3c3c;"></div>
<svg class="a" style="left:1514.5px;top:565.5px;" width="6" height="7" viewBox="0 0 6 7"><path d="M0.6 0.6 L5 3.5 L0.6 6.4 Z" fill="none" stroke="#8a8a8a" stroke-width="0.9"/></svg>
<svg class="a" style="left:1495.5px;top:562px;" width="15" height="14" viewBox="0 0 15 14"><rect x="0.5" y="0.5" width="9" height="9" fill="#b0b0b0"/><rect x="6" y="5.5" width="8" height="8" fill="#2c2c2c" stroke="#c8c8c8" stroke-width="1.2"/></svg>
<div class="a " style="left:1528px;top:560px;width:31px;height:18px;background:#2c2c2c;border-radius:4px;border:1px solid #222;box-sizing:border-box;"></div>
<div class="a " style="left:1547px;top:560px;width:1px;height:18px;background:#3c3c3c;"></div>
<svg class="a" style="left:1549.5px;top:565.5px;" width="6" height="7" viewBox="0 0 6 7"><path d="M0.6 0.6 L5 3.5 L0.6 6.4 Z" fill="none" stroke="#8a8a8a" stroke-width="0.9"/></svg>
<svg class="a" style="left:1531px;top:562.5px;" width="13" height="13" viewBox="0 0 13 13"><rect x="0.0" y="0.0" width="2.6" height="2.6" fill="#3ecf7d"/><rect x="0.0" y="5.2" width="2.6" height="2.6" fill="#3ecf7d"/><rect x="0.0" y="10.4" width="2.6" height="2.6" fill="#3ecf7d"/><rect x="2.6" y="2.6" width="2.6" height="2.6" fill="#3ecf7d"/><rect x="2.6" y="7.8" width="2.6" height="2.6" fill="#3ecf7d"/><rect x="5.2" y="0.0" width="2.6" height="2.6" fill="#3ecf7d"/><rect x="5.2" y="5.2" width="2.6" height="2.6" fill="#3ecf7d"/><rect x="5.2" y="10.4" width="2.6" height="2.6" fill="#3ecf7d"/><rect x="7.8" y="2.6" width="2.6" height="2.6" fill="#3ecf7d"/><rect x="7.8" y="7.8" width="2.6" height="2.6" fill="#3ecf7d"/><rect x="10.4" y="0.0" width="2.6" height="2.6" fill="#3ecf7d"/><rect x="10.4" y="5.2" width="2.6" height="2.6" fill="#3ecf7d"/><rect x="10.4" y="10.4" width="2.6" height="2.6" fill="#3ecf7d"/></svg>
<div class="a " style="left:1563.4px;top:560px;width:19px;height:18px;background:#2c2c2c;border-radius:4px;border:1px solid #222;box-sizing:border-box;"></div>
<svg class="a" style="left:1565.5px;top:561.5px;" width="15" height="15" viewBox="0 0 15 15"><rect x="6.44" y="1.61" width="2.12" height="2.76" rx="0.37" fill="#dcdcdc" transform="rotate(0 7.5 7.5)"/><rect x="6.44" y="1.61" width="2.12" height="2.76" rx="0.37" fill="#dcdcdc" transform="rotate(45 7.5 7.5)"/><rect x="6.44" y="1.61" width="2.12" height="2.76" rx="0.37" fill="#dcdcdc" transform="rotate(90 7.5 7.5)"/><rect x="6.44" y="1.61" width="2.12" height="2.76" rx="0.37" fill="#dcdcdc" transform="rotate(135 7.5 7.5)"/><rect x="6.44" y="1.61" width="2.12" height="2.76" rx="0.37" fill="#dcdcdc" transform="rotate(180 7.5 7.5)"/><rect x="6.44" y="1.61" width="2.12" height="2.76" rx="0.37" fill="#dcdcdc" transform="rotate(225 7.5 7.5)"/><rect x="6.44" y="1.61" width="2.12" height="2.76" rx="0.37" fill="#dcdcdc" transform="rotate(270 7.5 7.5)"/><rect x="6.44" y="1.61" width="2.12" height="2.76" rx="0.37" fill="#dcdcdc" transform="rotate(315 7.5 7.5)"/><circle cx="7.5" cy="7.5" r="4.6" fill="#dcdcdc"/><circle cx="7.5" cy="7.5" r="1.93" fill="#2c2c2c"/></svg>
<div class="a " style="left:1593px;top:85px;width:39px;height:22px;background:#444;border-radius:5px 5px 0 0;"></div>
<div class="a" style="left:1598.0px;top:87.30000000000001px;height:20px;line-height:20px;color:#e6e6e6;font-size:13px;letter-spacing:-0.314px;word-spacing:-0.5px;white-space:pre;">Color</div>
<div class="a " style="left:1633.5px;top:85px;width:70px;height:22px;background:#2a2a2a;border-radius:5px 5px 0 0;"></div>
<div class="a" style="left:1639.3px;top:87.30000000000001px;height:20px;line-height:20px;color:#e6e6e6;font-size:13px;letter-spacing:-0.727px;word-spacing:-0.5px;white-space:pre;">Add Layers</div>
<div class="a " style="left:1593px;top:107px;width:321px;height:377px;background:#444;"></div>
<div class="a " style="left:1900px;top:107px;width:14px;height:377px;background:#383838;"></div>
<div class="a " style="left:1902px;top:108px;width:10px;height:302px;background:#4f4f4f;border-radius:5px;"></div>
<div class="a" style="left:1646px;top:120px;width:200px;height:200px;border-radius:50%;background:conic-gradient(from 90deg,#ff0000,#ee00e2,#0000ff,#00e2f0,#00ff00,#eaea00,#ff0000);-webkit-mask:radial-gradient(circle,transparent 74.5px,#000 75.5px,#000 99.5px,transparent 100.5px);mask:radial-gradient(circle,transparent 74.5px,#000 75.5px,#000 99.5px,transparent 100.5px);"></div>
<div class="a " style="left:1702px;top:176px;width:90px;height:90px;background:linear-gradient(to right,#000,rgba(0,0,0,0)),linear-gradient(to bottom,#fff,#00ff80);"></div>
<svg class="a" style="left:1663.5px;top:169.5px;" width="13" height="13" viewBox="0 0 13 13"><circle cx="6.5" cy="6.5" r="5.6" fill="none" stroke="#f0f0f0" stroke-width="1"/></svg>
<svg class="a" style="left:1774.5px;top:235.5px;" width="13" height="13" viewBox="0 0 13 13"><circle cx="6.5" cy="6.5" r="5.6" fill="none" stroke="#f0f0f0" stroke-width="1"/></svg>
<div class="a " style="left:1600px;top:333px;width:22px;height:22px;background:#3ce38e;border-radius:3px;"></div>
<div class="a " style="left:1871px;top:333.6px;width:21.7px;height:21px;background:#2a2a2a;border-radius:4px;border:1px solid #1c1c1c;box-sizing:border-box;"></div>
<svg class="a" style="left:1875.5px;top:337.5px;" width="13" height="13" viewBox="0 0 13 13"><path d="M1 12 L1.5 9.5 L7 4 L9 6 L3.5 11.5 Z" fill="none" stroke="#c8c8c8" stroke-width="1.1"/><path d="M6.3 3 L10 6.7 M7.5 4.2 L10 1.6 Q11.2 0.6 12 1.5 Q12.6 2.3 11.5 3.4 L9 5.7" stroke="#c8c8c8" stroke-width="1.8" fill="#c8c8c8" stroke-linecap="round"/></svg>
<div class="a " style="left:1600px;top:360.6px;width:49.5px;height:17px;background:#464646;border-radius:3px;border:1px solid #5c5c5c;box-sizing:border-box;"></div>
<div class="a" style="left:1603.5px;top:360.4px;height:20px;line-height:20px;color:#f0f0f0;font-size:13px;letter-spacing:-0.873px;word-spacing:-0.5px;white-space:pre;">Hex</div>
<svg class="a" style="left:1637px;top:367px;" width="9" height="6" viewBox="0 0 9 6"><path d="M0.5 0.7 L4.5 4.7 L8.5 0.7" fill="none" stroke="#d0d0d0" stroke-width="1.2"/></svg>
<div class="a " style="left:1653px;top:358.5px;width:239.7px;height:21.3px;background:#2a2a2a;border-radius:3px;"></div>
<div class="a" style="left:1657.8px;top:360.2px;height:20px;line-height:20px;color:#5a5a5a;font-size:12px;letter-spacing:-0.415px;word-spacing:-0.5px;white-space:pre;">#</div>
<div class="a" style="left:1670.4px;top:360.2px;height:20px;line-height:20px;color:#f0f0f0;font-size:13px;letter-spacing:-0.675px;word-spacing:-0.5px;white-space:pre;">3ce38e</div>
<div class="a " style="left:1600px;top:390px;width:234px;height:4px;background:#e0e0e0;border-radius:2px;"></div>
<svg class="a" style="left:1828px;top:386.5px;" width="11" height="11" viewBox="0 0 11 11"><circle cx="5.5" cy="5.5" r="5.3" fill="#72cdb2"/><circle cx="5.5" cy="5.5" r="2" fill="#4fa48c"/></svg>
<div class="a " style="left:1849px;top:384.2px;width:43.7px;height:15.2px;background:#2a2a2a;border-radius:3px;"></div>
<div class="a" style="left:1853.0px;top:383.29999999999995px;height:20px;line-height:20px;color:#555;font-size:13px;letter-spacing:-0.450px;word-spacing:-0.5px;white-space:pre;">A</div>
<div class="a" style="left:1866.0px;top:383.4px;height:20px;line-height:20px;color:#f0f0f0;font-size:13px;letter-spacing:-0.564px;word-spacing:-0.5px;white-space:pre;">255</div>
<div class="a " style="left:1597px;top:406.5px;width:299px;height:21.5px;background:#262626;"></div>
<div class="a " style="left:1599px;top:408.5px;width:147.8px;height:19.5px;background:#444;border-radius:4px 4px 0 0;"></div>
<div class="a" style="left:1648.0px;top:408.09999999999997px;height:20px;line-height:20px;color:#f0f0f0;font-size:13px;letter-spacing:-0.795px;word-spacing:-0.5px;white-space:pre;">Swatches</div>
<div class="a" style="left:1793.5px;top:408.09999999999997px;height:20px;line-height:20px;color:#b4b4b4;font-size:13px;letter-spacing:-0.526px;word-spacing:-0.5px;white-space:pre;">Generator</div>
<div class="a " style="left:1598.3px;top:431.7px;width:256.7px;height:16.6px;background:#555;border-radius:4px;"></div>
<div class="a " style="left:1599.3px;top:432.5px;width:61.7px;height:15px;background:#222;border-radius:3px;"></div>
<svg class="a" style="left:1606px;top:435px;" width="11" height="10" viewBox="0 0 11 10"><path d="M1 0 V10 M4 0 V10 M6.8 0 L10 10" stroke="#3ecf7d" stroke-width="1.7"/></svg>
<div class="a" style="left:1621.4px;top:431.4px;height:20px;line-height:20px;color:#f0f0f0;font-size:13px;letter-spacing:-0.391px;word-spacing:-0.5px;white-space:pre;">Library</div>
<svg class="a" style="left:1670.6px;top:434.5px;" width="11" height="11" viewBox="0 0 11 11"><path d="M0.5 1 H4.5 L5.5 2.5 H10.5 V10.5 H0.5 Z" fill="none" stroke="#d0d0d0" stroke-width="1.1"/><path d="M2.5 5.3 H8.5 M2.5 7.8 H8.5" stroke="#d0d0d0" stroke-width="1.2"/></svg>
<div class="a" style="left:1686.5px;top:431.4px;height:20px;line-height:20px;color:#e0e0e0;font-size:13px;letter-spacing:-0.466px;word-spacing:-0.5px;white-space:pre;">Project</div>
<svg class="a" style="left:1737.5px;top:434.5px;" width="9" height="11" viewBox="0 0 9 11"><path d="M0.6 0.6 H5 L8 3.6 V10.4 H0.6 Z M5 0.6 V3.6 H8" fill="none" stroke="#d0d0d0" stroke-width="1.1"/></svg>
<div class="a" style="left:1752.0px;top:431.4px;height:20px;line-height:20px;color:#e0e0e0;font-size:13px;letter-spacing:-1.173px;word-spacing:-0.5px;white-space:pre;">Scene</div>
<svg class="a" style="left:1800.8px;top:434.5px;" width="11" height="11" viewBox="0 0 11 11"><path d="M3 0.6 H7.5 Q10.4 0.6 10.4 3.5 V6 L6 10.4 H3 Q0.6 10.4 0.6 8 V3 Q0.6 0.6 3 0.6 Z M10.4 6 H7.5 Q6 6 6 7.5 V10.4" fill="none" stroke="#d0d0d0" stroke-width="1.1"/></svg>
<div class="a" style="left:1816.5px;top:431.4px;height:20px;line-height:20px;color:#e0e0e0;font-size:13px;letter-spacing:-0.968px;word-spacing:-0.5px;white-space:pre;">Labels</div>
<div class="a " style="left:1857.8px;top:431.7px;width:37px;height:16.6px;background:#555;border-radius:4px;"></div>
<div class="a " style="left:1858.8px;top:432.5px;width:16.5px;height:15px;background:#222;border-radius:3px;"></div>
<svg class="a" style="left:1862.5px;top:435.5px;" width="10" height="10" viewBox="0 0 10 10"><rect x="0" y="0" width="3.8" height="3.8" fill="#3ecf7d"/><rect x="5.6" y="0" width="3.8" height="3.8" fill="#3ecf7d"/><rect x="0" y="5.6" width="3.8" height="3.8" fill="#3ecf7d"/><rect x="5.6" y="5.6" width="3.8" height="3.8" fill="#3ecf7d"/></svg>
<svg class="a" style="left:1881px;top:435.5px;" width="11" height="10" viewBox="0 0 11 10"><path d="M0 1 H11 M0 4.5 H11 M0 8 H11" stroke="#d0d0d0" stroke-width="1.1"/></svg>
<div class="a " style="left:1598.3px;top:452.6px;width:275.2px;height:16.6px;background:#4e4e4e;border-radius:3px;border:1px solid #5c5c5c;box-sizing:border-box;"></div>
<div class="a" style="left:1601.0px;top:452.0px;height:20px;line-height:20px;color:#f0f0f0;font-size:13px;letter-spacing:-0.436px;word-spacing:-0.5px;white-space:pre;">Alice</div>
<svg class="a" style="left:1860.6px;top:458.5px;" width="9" height="6" viewBox="0 0 9 6"><path d="M0.5 0.7 L4.5 4.7 L8.5 0.7" fill="none" stroke="#d0d0d0" stroke-width="1.2"/></svg>
<div class="a " style="left:1880px;top:460px;width:2.4px;height:2.4px;background:#d0d0d0;border-radius:1px;"></div>
<div class="a " style="left:1885px;top:460px;width:2.4px;height:2.4px;background:#d0d0d0;border-radius:1px;"></div>
<div class="a " style="left:1890px;top:460px;width:2.4px;height:2.4px;background:#d0d0d0;border-radius:1px;"></div>
<div class="a " style="left:1598px;top:470px;width:297px;height:14px;background:#262626;"></div>
<div class="a " style="left:1600px;top:472px;width:18px;height:12px;background:#477fab;border-radius:3px 3px 0 0;"></div>
<div class="a " style="left:1622px;top:472px;width:18px;height:12px;background:#d8dcb9;border-radius:3px 3px 0 0;"></div>
<div class="a " style="left:1644px;top:472px;width:18px;height:12px;background:#f2c162;border-radius:3px 3px 0 0;"></div>
<div class="a " style="left:1666px;top:472px;width:18px;height:12px;background:#c4ad9b;border-radius:3px 3px 0 0;"></div>
<div class="a " style="left:1688px;top:472px;width:18px;height:12px;background:#dc6960;border-radius:3px 3px 0 0;"></div>
<div class="a " style="left:1593px;top:490.5px;width:38px;height:21.5px;background:#444;border-radius:5px 5px 0 0;"></div>
<div class="a" style="left:1598.7px;top:491.9px;height:20px;line-height:20px;color:#e6e6e6;font-size:13px;letter-spacing:-0.442px;word-spacing:-0.5px;white-space:pre;">Align</div>
<div class="a " style="left:1593px;top:512px;width:321px;height:68px;background:#444;"></div>
<div class="a" style="left:1601.0px;top:521.9px;height:20px;line-height:20px;color:#e6e6e6;font-size:13px;letter-spacing:-0.424px;word-spacing:-0.5px;white-space:pre;">Alignment</div>
<div class="a" style="left:1601.0px;top:549.5px;height:20px;line-height:20px;color:#e6e6e6;font-size:13px;letter-spacing:-0.111px;word-spacing:-0.5px;white-space:pre;">Distribution</div>
<div class="a " style="left:1790px;top:522px;width:54px;height:17.6px;background:#262626;border-radius:4px;border:1px solid #1c1c1c;box-sizing:border-box;"></div>
<div class="a " style="left:1807.5px;top:523px;width:1px;height:15.6px;background:#3c3c3c;"></div>
<div class="a " style="left:1825.5px;top:523px;width:1px;height:15.6px;background:#3c3c3c;"></div>
<div class="a " style="left:1852px;top:522px;width:54px;height:17.6px;background:#262626;border-radius:4px;border:1px solid #1c1c1c;box-sizing:border-box;"></div>
<div class="a " style="left:1869.5px;top:523px;width:1px;height:15.6px;background:#3c3c3c;"></div>
<div class="a " style="left:1887.5px;top:523px;width:1px;height:15.6px;background:#3c3c3c;"></div>
<div class="a " style="left:1790px;top:550.3px;width:54px;height:17.6px;background:#262626;border-radius:4px;border:1px solid #1c1c1c;box-sizing:border-box;"></div>
<div class="a " style="left:1807.5px;top:551.3px;width:1px;height:15.6px;background:#3c3c3c;"></div>
<div class="a " style="left:1825.5px;top:551.3px;width:1px;height:15.6px;background:#3c3c3c;"></div>
<svg class="a" style="left:1790px;top:522px;" width="54" height="18" viewBox="0 0 54 18"><path d="M3.5 3 V15" stroke="#e4e4e4" stroke-width="1.2"/><path d="M5.5 6.5 H11 M5.5 11.5 H14.5" stroke="#e4e4e4" stroke-width="1.8"/><path d="M27 2.5 V15.5" stroke="#e4e4e4" stroke-width="1.2"/><path d="M23.5 6.5 H30.5 M21.5 11.5 H32.5" stroke="#e4e4e4" stroke-width="1.8"/><path d="M50.5 3 V15" stroke="#e4e4e4" stroke-width="1.2"/><path d="M43 6.5 H48.5 M39.5 11.5 H48.5" stroke="#e4e4e4" stroke-width="1.8"/></svg>
<svg class="a" style="left:1852px;top:522px;" width="54" height="18" viewBox="0 0 54 18"><path d="M3 3.5 H15" stroke="#e4e4e4" stroke-width="1.2"/><path d="M6.5 5.5 V14.5 M11.5 5.5 V10.5" stroke="#e4e4e4" stroke-width="1.8"/><path d="M20.5 9 H33.5" stroke="#e4e4e4" stroke-width="1.2"/><path d="M24.5 3.5 V14.5 M29.5 5.5 V12.5" stroke="#e4e4e4" stroke-width="1.8"/><path d="M39 14.5 H51" stroke="#e4e4e4" stroke-width="1.2"/><path d="M42.5 7.5 V12.5 M47.5 3.5 V12.5" stroke="#e4e4e4" stroke-width="1.8"/></svg>
<svg class="a" style="left:1790px;top:550.3px;" width="54" height="18" viewBox="0 0 54 18"><path d="M3.5 2 V16 M14.5 2 V16" stroke="#e4e4e4" stroke-width="1.2"/><path d="M9 4.5 V13.5" stroke="#e4e4e4" stroke-width="2.2"/><path d="M20 3.5 H34 M20 14.5 H34" stroke="#e4e4e4" stroke-width="1.2"/><path d="M22.5 9 H31.5" stroke="#e4e4e4" stroke-width="2.2"/><path d="M38.5 5 V3.5 Q38.5 2.5 39.5 2.5 H41 M49 2.5 H50.5 Q51.5 2.5 51.5 3.5 V5 M51.5 13 V14.5 Q51.5 15.5 50.5 15.5 H49 M41 15.5 H39.5 Q38.5 15.5 38.5 14.5 V13" fill="none" stroke="#e4e4e4" stroke-width="1"/><rect x="40" y="10" width="2.6" height="3.5" fill="#e4e4e4"/><rect x="44" y="7" width="2.6" height="3.5" fill="#e4e4e4"/><rect x="48" y="4.5" width="2.6" height="3.5" fill="#e4e4e4"/></svg>
<div class="a " style="left:494px;top:586.5px;width:89px;height:22px;background:#444;border-radius:5px 5px 0 0;"></div>
<div class="a" style="left:499.6px;top:587.8px;height:20px;line-height:20px;color:#f0f0f0;font-size:13px;letter-spacing:-0.709px;word-spacing:-0.5px;white-space:pre;">Scene Window</div>
<div class="a " style="left:583.8px;top:586.5px;width:100px;height:21.5px;background:#2a2a2a;border-radius:5px 5px 0 0;"></div>
<div class="a" style="left:589.3px;top:587.8px;height:20px;line-height:20px;color:#e6e6e6;font-size:13px;letter-spacing:-0.533px;word-spacing:-0.5px;white-space:pre;">JavaScript Editor</div>
<div class="a " style="left:685px;top:586.5px;width:111.7px;height:21.5px;background:#2a2a2a;border-radius:5px 5px 0 0;"></div>
<div class="a" style="left:690.4px;top:587.8px;height:20px;line-height:20px;color:#e6e6e6;font-size:13px;letter-spacing:-0.703px;word-spacing:-0.5px;white-space:pre;">Dependency Graph</div>
<div class="a " style="left:494px;top:608px;width:1420px;height:1.3px;background:#3ecf7d;"></div>
<div class="a " style="left:494px;top:609.3px;width:1420px;height:21px;background:#282828;"></div>
<div class="a" style="left:723.5px;top:609.5px;height:20px;line-height:20px;color:#b4b4b4;font-size:13px;letter-spacing:-0.431px;word-spacing:-0.5px;white-space:pre;transform:translateX(-38.5px);">Composition 1</div>
<div class="a" style="left:1193.5px;top:609.5px;height:20px;line-height:20px;color:#b4b4b4;font-size:13px;letter-spacing:-0.431px;word-spacing:-0.5px;white-space:pre;transform:translateX(-38.5px);">Composition 2</div>
<div class="a " style="left:1439px;top:610.4px;width:470px;height:20px;background:#444;border-radius:4px 4px 0 0;"></div>
<div class="a" style="left:1663.2px;top:609.8px;height:20px;line-height:20px;color:#f0f0f0;font-size:13px;letter-spacing:-0.477px;word-spacing:-0.5px;white-space:pre;transform:translateX(-38.2px);">Composition 3</div>
<svg class="a" style="left:952.3px;top:616px;" width="8" height="8" viewBox="0 0 8 8"><path d="M0.5 0.5 L7.5 7.5 M7.5 0.5 L0.5 7.5" stroke="#9a9a9a" stroke-width="1"/></svg>
<svg class="a" style="left:1422px;top:616px;" width="8" height="8" viewBox="0 0 8 8"><path d="M0.5 0.5 L7.5 7.5 M7.5 0.5 L0.5 7.5" stroke="#9a9a9a" stroke-width="1"/></svg>
<svg class="a" style="left:1892.3px;top:616px;" width="8" height="8" viewBox="0 0 8 8"><path d="M0.5 0.5 L7.5 7.5 M7.5 0.5 L0.5 7.5" stroke="#9a9a9a" stroke-width="1"/></svg>
<div class="a " style="left:969px;top:614px;width:1px;height:12px;background:#9a9a9a;"></div>
<div class="a " style="left:494px;top:630.3px;width:490.3px;height:345.7px;background:#2d2d2d;"></div>
<div class="a " style="left:494px;top:630.3px;width:490.3px;height:23.5px;background:#444;"></div>
<div class="a " style="left:496px;top:632px;width:280px;height:20.4px;background:#222;border-radius:10px;"></div>
<svg class="a" style="left:500px;top:636px;" width="14" height="14" viewBox="0 0 14 14"><circle cx="6" cy="6" r="4.7" fill="none" stroke="#e0e0e0" stroke-width="1.2"/><path d="M9.6 9.6 L12.6 12.6" stroke="#e0e0e0" stroke-width="2" stroke-linecap="round"/></svg>
<div class="a" style="left:520.6px;top:633.3px;height:20px;line-height:20px;color:#8c8c8c;font-size:13px;letter-spacing:-0.674px;word-spacing:-0.5px;white-space:pre;">Enter a layer name</div>
<div class="a " style="left:778.4px;top:632.6px;width:19px;height:18.8px;background:#2b2b2b;border-radius:4px;border:1px solid #242424;box-sizing:border-box;"></div>
<div class="a " style="left:822.2px;top:632.6px;width:19.4px;height:18.8px;background:#3a3a3a;border-radius:4px;border:1px solid #242424;box-sizing:border-box;"></div>
<div class="a " style="left:844.2px;top:632.6px;width:19px;height:18.8px;background:#3a3a3a;border-radius:4px;border:1px solid #242424;box-sizing:border-box;"></div>
<div class="a " style="left:866px;top:632.6px;width:19px;height:18.8px;background:#3a3a3a;border-radius:4px;border:1px solid #242424;box-sizing:border-box;"></div>
<svg class="a" style="left:781.5px;top:635.5px;" width="14" height="14" viewBox="0 0 14 14"><path d="M2 6.5 H11 M6.5 2 V11" stroke="#f0f0f0" stroke-width="1.8"/><path d="M14 11 V14 H11 Z" fill="#6ec9a0"/></svg>
<svg class="a" style="left:824.5px;top:635px;" width="15" height="15" viewBox="0 0 15 15"><circle cx="9.5" cy="5.5" r="4" fill="#d0d0d0"/><path d="M2 9 Q3 13 8 13.5 M4 6.5 Q5 11 10.5 11.5" fill="none" stroke="#8a8a8a" stroke-width="1.6"/></svg>
<svg class="a" style="left:846px;top:634.5px;" width="16" height="15" viewBox="0 0 16 15"><path d="M8.5 4.8 L9.676 7.824 L12.7 9 L9.676 10.176 L8.5 13.2 L7.324 10.176 L4.3 9 L7.324 7.824 Z" fill="#e0e0e0"/><circle cx="3" cy="3" r="1.1" fill="#e0e0e0"/><circle cx="9" cy="2.5" r="1.1" fill="#e0e0e0"/><circle cx="3" cy="9" r="1.1" fill="#e0e0e0"/><path d="M14 11 V14 H11 Z" fill="#6ec9a0"/></svg>
<svg class="a" style="left:868px;top:635.5px;" width="15" height="14" viewBox="0 0 15 14"><path d="M0.5 2.5 H3.5 M7 2.5 H13.5 M0.5 7 H7.5 M11 7 H13.5 M0.5 11.5 H3.5 M7 11.5 H13.5" stroke="#d0d0d0" stroke-width="1" stroke-dasharray="2.2 1"/><circle cx="5.2" cy="2.5" r="1.5" fill="none" stroke="#d0d0d0"/><circle cx="9.2" cy="7" r="1.5" fill="none" stroke="#d0d0d0"/><circle cx="5.2" cy="11.5" r="1.5" fill="none" stroke="#d0d0d0"/><path d="M15 11 V14 H12 Z" fill="#6ec9a0"/></svg>
<div class="a " style="left:888px;top:632.6px;width:94.3px;height:19px;background:#2a2a2a;border-radius:3px;"></div>
<div class="a" style="left:893.0px;top:633.1px;height:20px;line-height:20px;color:#505050;font-size:13px;letter-spacing:-0.450px;word-spacing:-0.5px;white-space:pre;">F</div>
<div class="a" style="left:905.8px;top:633.3px;height:20px;line-height:20px;color:#f0f0f0;font-size:13px;letter-spacing:-0.897px;word-spacing:-0.5px;white-space:pre;">107</div>
<div class="a " style="left:494px;top:653.8px;width:490.3px;height:18px;background:#444;"></div>
<svg class="a" style="left:500px;top:657.5px;" width="10" height="12" viewBox="0 0 10 12"><rect x="0.5" y="5" width="9" height="7" rx="1" fill="#c8c8c8"/><path d="M2.5 5 V3.3 Q2.5 0.8 5 0.8 Q7.5 0.8 7.5 3.3 V5" fill="none" stroke="#c8c8c8" stroke-width="1.3"/><rect x="4.3" y="7.3" width="1.4" height="2.4" fill="#444"/></svg>
<svg class="a" style="left:517px;top:658.7px;" width="14" height="10" viewBox="0 0 14 10"><path d="M0.6 5 Q7 -2.4 13.4 5 Q7 12.4 0.6 5 Z" fill="none" stroke="#c8c8c8" stroke-width="1.2"/><circle cx="7" cy="5" r="2.3" fill="none" stroke="#c8c8c8" stroke-width="1.2"/></svg>
<svg class="a" style="left:536.5px;top:656.5px;" width="13" height="14" viewBox="0 0 13 14"><path d="M6.5 0.8 L12.2 3.8 V10.2 L6.5 13.2 L0.8 10.2 V3.8 Z M0.8 3.8 L6.5 6.8 L12.2 3.8 M6.5 6.8 V13.2" fill="none" stroke="#c8c8c8" stroke-width="1.1"/></svg>
<svg class="a" style="left:555px;top:657.5px;" width="15" height="12" viewBox="0 0 15 12"><path d="M0.5 4 H3 L7 0.8 V11.2 L3 8 H0.5 Z" fill="#c8c8c8"/><path d="M9 3.5 Q10.5 6 9 8.5 M11.2 1.8 Q13.8 6 11.2 10.2" fill="none" stroke="#c8c8c8" stroke-width="1.2"/></svg>
<svg class="a" style="left:574.5px;top:657px;" width="13" height="13" viewBox="0 0 13 13"><path d="M1 12 L1.5 9.5 L7 4 L9 6 L3.5 11.5 Z" fill="none" stroke="#c8c8c8" stroke-width="1.1"/><path d="M6.3 3 L10 6.7 M7.5 4.2 L10 1.6 Q11.2 0.6 12 1.5 Q12.6 2.3 11.5 3.4 L9 5.7" stroke="#c8c8c8" stroke-width="1.8" fill="#c8c8c8" stroke-linecap="round"/></svg>
<svg class="a" style="left:593.4px;top:659px;" width="14" height="9" viewBox="0 0 14 9"><path d="M0.5 4.5 L4 0.5 H13.5 V8.5 H4 Z" fill="#c8c8c8"/><circle cx="4.6" cy="4.5" r="1.3" fill="#444"/></svg>
<div class="a" style="left:649.0px;top:654.2px;height:20px;line-height:20px;color:#e6e6e6;font-size:13px;letter-spacing:-0.920px;word-spacing:-0.5px;white-space:pre;">Name</div>
<div class="a " style="left:494px;top:672.7px;width:476px;height:21.6px;background:#383838;"></div>
<div class="a " style="left:496px;top:674.2px;width:18px;height:17.6px;background:#282828;border-radius:2px;"></div>
<div class="a " style="left:514.9px;top:674.2px;width:18px;height:17.6px;background:#282828;border-radius:2px;"></div>
<svg class="a" style="left:517.5px;top:677.0px;" width="13" height="13" viewBox="0 0 13 13"><path d="M11.3 6.2 A5.3 5.3 0 1 1 8.6 1.8" fill="none" stroke="#dcdcdc" stroke-width="1.1"/><path d="M3.8 6 L6.2 8.6 L11.8 1.8" fill="none" stroke="#dcdcdc" stroke-width="1.3"/></svg>
<div class="a " style="left:572.6px;top:674.7px;width:16.8px;height:16.4px;background:#c9f07f;border-radius:3px;"></div>
<svg class="a" style="left:593.4px;top:678.8px;" width="14" height="9" viewBox="0 0 14 9"><path d="M0.5 4.5 L4 0.5 H13.5 V8.5 H4 Z" fill="#c8c8c8"/><circle cx="4.6" cy="4.5" r="1.3" fill="#383838"/></svg>
<svg class="a" style="left:646px;top:676.5px;" width="18" height="14" viewBox="0 0 18 14"><path d="M0.5 7 L2 4.5 Q3.6 0.5 5 5.5 L6.3 10 Q7.6 14 9 8.5 L10 4 Q11.3 0 12.6 5 L13.8 9.5 Q15 13 16.5 8.5 L17 7" fill="none" stroke="#6fd08a" stroke-width="1.3"/></svg>
<div class="a" style="left:667.0px;top:674.0px;height:20px;line-height:20px;color:#f0f0f0;font-size:13px;letter-spacing:-0.463px;word-spacing:-0.5px;white-space:pre;">Oscillator [Position.Z] Cosine</div>
<div class="a " style="left:930px;top:674.7px;width:21px;height:16.6px;background:#2a2a2a;border-radius:3px;"></div>
<div class="a " style="left:940px;top:674.7px;width:1px;height:16.6px;background:#383838;"></div>
<svg class="a" style="left:930px;top:678px;" width="21" height="10" viewBox="0 0 21 10"><path d="M1.8 5 L5.2 1.8 H8 V8.2 H5.2 Z" fill="#e0c050"/><path d="M19.2 5 L15.8 1.8 H13 V8.2 H15.8 Z" fill="#777"/></svg>
<svg class="a" style="left:956px;top:678px;" width="10" height="10" viewBox="0 0 10 10"><circle cx="5" cy="5" r="4" fill="none" stroke="#8a8a8a" stroke-width="1.1"/></svg>
<div class="a " style="left:494px;top:694.7px;width:476px;height:21.6px;background:#383838;"></div>
<div class="a " style="left:496px;top:696.2px;width:18px;height:17.6px;background:#282828;border-radius:2px;"></div>
<div class="a " style="left:514.9px;top:696.2px;width:18px;height:17.6px;background:#282828;border-radius:2px;"></div>
<svg class="a" style="left:517.5px;top:699.0px;" width="13" height="13" viewBox="0 0 13 13"><path d="M11.3 6.2 A5.3 5.3 0 1 1 8.6 1.8" fill="none" stroke="#dcdcdc" stroke-width="1.1"/><path d="M3.8 6 L6.2 8.6 L11.8 1.8" fill="none" stroke="#dcdcdc" stroke-width="1.3"/></svg>
<div class="a " style="left:572.6px;top:696.7px;width:16.8px;height:16.4px;background:#c9f07f;border-radius:3px;"></div>
<svg class="a" style="left:593.4px;top:700.8px;" width="14" height="9" viewBox="0 0 14 9"><path d="M0.5 4.5 L4 0.5 H13.5 V8.5 H4 Z" fill="#c8c8c8"/><circle cx="4.6" cy="4.5" r="1.3" fill="#383838"/></svg>
<svg class="a" style="left:646px;top:698.5px;" width="18" height="14" viewBox="0 0 18 14"><path d="M0.5 7 L2 4.5 Q3.6 0.5 5 5.5 L6.3 10 Q7.6 14 9 8.5 L10 4 Q11.3 0 12.6 5 L13.8 9.5 Q15 13 16.5 8.5 L17 7" fill="none" stroke="#6fd08a" stroke-width="1.3"/></svg>
<div class="a" style="left:667.0px;top:696.0px;height:20px;line-height:20px;color:#f0f0f0;font-size:13px;letter-spacing:-0.427px;word-spacing:-0.5px;white-space:pre;">Oscillator [Position.X] Sine Driver</div>
<div class="a " style="left:930px;top:696.7px;width:21px;height:16.6px;background:#2a2a2a;border-radius:3px;"></div>
<div class="a " style="left:940px;top:696.7px;width:1px;height:16.6px;background:#383838;"></div>
<svg class="a" style="left:930px;top:700px;" width="21" height="10" viewBox="0 0 21 10"><path d="M1.8 5 L5.2 1.8 H8 V8.2 H5.2 Z" fill="#e0c050"/><path d="M19.2 5 L15.8 1.8 H13 V8.2 H15.8 Z" fill="#d05ae0"/></svg>
<svg class="a" style="left:956px;top:700px;" width="10" height="10" viewBox="0 0 10 10"><circle cx="5" cy="5" r="4" fill="none" stroke="#8a8a8a" stroke-width="1.1"/></svg>
<div class="a " style="left:494px;top:738.7px;width:476px;height:21.6px;background:#383838;"></div>
<div class="a " style="left:496px;top:740.2px;width:18px;height:17.6px;background:#282828;border-radius:2px;"></div>
<div class="a " style="left:514.9px;top:740.2px;width:18px;height:17.6px;background:#282828;border-radius:2px;"></div>
<svg class="a" style="left:517px;top:744.2px;" width="14" height="10" viewBox="0 0 14 10"><path d="M0.6 5 Q7 -2.4 13.4 5 Q7 12.4 0.6 5 Z" fill="none" stroke="#dcdcdc" stroke-width="1.2"/><circle cx="7" cy="5" r="2.3" fill="none" stroke="#dcdcdc" stroke-width="1.2"/></svg>
<div class="a " style="left:533.8px;top:740.2px;width:18px;height:17.6px;background:#282828;border-radius:2px;"></div>
<div class="a " style="left:572.6px;top:740.7px;width:16.8px;height:16.4px;background:#ffe680;border-radius:3px;"></div>
<svg class="a" style="left:593.4px;top:744.8px;" width="14" height="9" viewBox="0 0 14 9"><path d="M0.5 4.5 L4 0.5 H13.5 V8.5 H4 Z" fill="#c8c8c8"/><circle cx="4.6" cy="4.5" r="1.3" fill="#383838"/></svg>
<div class="a " style="left:610.7px;top:740.2px;width:14px;height:17.6px;background:#333;border-radius:2px;"></div>
<svg class="a" style="left:613.5px;top:747px;" width="9" height="6" viewBox="0 0 9 6"><path d="M0.5 0.7 L4.5 4.7 L8.5 0.7" fill="none" stroke="#777" stroke-width="1.2"/></svg>
<div class="a " style="left:625.6px;top:740.2px;width:16.5px;height:17.6px;background:#333;border-radius:2px;"></div>
<svg class="a" style="left:648.5px;top:742px;" width="14" height="14" viewBox="0 0 14 14"><rect x="1" y="1" width="12" height="12" rx="1.5" fill="none" stroke="#f0d860" stroke-width="1.3" stroke-dasharray="3.4 2.2"/></svg>
<div class="a" style="left:667.0px;top:740.0px;height:20px;line-height:20px;color:#f0f0f0;font-size:13px;letter-spacing:-0.808px;word-spacing:-0.5px;white-space:pre;">Ellipse Shape</div>
<div class="a " style="left:494px;top:760.7px;width:476px;height:21.6px;background:#383838;"></div>
<div class="a " style="left:496px;top:762.2px;width:18px;height:17.6px;background:#282828;border-radius:2px;"></div>
<div class="a " style="left:514.9px;top:762.2px;width:18px;height:17.6px;background:#282828;border-radius:2px;"></div>
<svg class="a" style="left:517px;top:766.2px;" width="14" height="10" viewBox="0 0 14 10"><path d="M0.6 5 Q7 -2.4 13.4 5 Q7 12.4 0.6 5 Z" fill="none" stroke="#dcdcdc" stroke-width="1.2"/><circle cx="7" cy="5" r="2.3" fill="none" stroke="#dcdcdc" stroke-width="1.2"/></svg>
<div class="a " style="left:533.8px;top:762.2px;width:18px;height:17.6px;background:#282828;border-radius:2px;"></div>
<div class="a " style="left:572.6px;top:762.7px;width:16.8px;height:16.4px;background:#b794ff;border-radius:3px;"></div>
<svg class="a" style="left:593.4px;top:766.8px;" width="14" height="9" viewBox="0 0 14 9"><path d="M0.5 4.5 L4 0.5 H13.5 V8.5 H4 Z" fill="#c8c8c8"/><circle cx="4.6" cy="4.5" r="1.3" fill="#383838"/></svg>
<svg class="a" style="left:665.8px;top:763px;" width="16" height="16" viewBox="0 0 16 16"><path d="M1.5 1 V15 M14.5 1 V15" stroke="#e0e0e0" stroke-width="1.1"/><path d="M0 1 H4 M6.5 1 H9.5 M12 1 H16 M0 15 H4 M6.5 15 H9.5 M12 15 H16" stroke="#e0e0e0" stroke-width="1.1"/><path d="M4.2 4.8 H11.8 M8 4.8 V12.3" stroke="#f0d860" stroke-width="2"/></svg>
<div class="a" style="left:686.2px;top:762.0px;height:20px;line-height:20px;color:#f0f0f0;font-size:13px;letter-spacing:-0.581px;word-spacing:-0.5px;white-space:pre;">Cavalry</div>
<div class="a " style="left:494px;top:716.7px;width:476px;height:21.6px;background:#434a5c;"></div>
<div class="a " style="left:622px;top:714.5px;width:351px;height:25.3px;background:#434a5c;"></div>
<div class="a " style="left:496px;top:718.2px;width:18px;height:17.6px;background:#282828;border-radius:2px;"></div>
<div class="a " style="left:514.9px;top:718.2px;width:18px;height:17.6px;background:#282828;border-radius:2px;"></div>
<svg class="a" style="left:517.5px;top:721.0px;" width="13" height="13" viewBox="0 0 13 13"><path d="M11.3 6.2 A5.3 5.3 0 1 1 8.6 1.8" fill="none" stroke="#dcdcdc" stroke-width="1.1"/><path d="M3.8 6 L6.2 8.6 L11.8 1.8" fill="none" stroke="#dcdcdc" stroke-width="1.3"/></svg>
<div class="a " style="left:572.6px;top:718.7px;width:16.8px;height:16.4px;background:#6b93e8;border-radius:3px;"></div>
<svg class="a" style="left:593.4px;top:722.8px;" width="14" height="9" viewBox="0 0 14 9"><path d="M0.5 4.5 L4 0.5 H13.5 V8.5 H4 Z" fill="#c8c8c8"/><circle cx="4.6" cy="4.5" r="1.3" fill="#434a5c"/></svg>
<svg class="a" style="left:647.5px;top:720.5px;" width="15" height="13" viewBox="0 0 15 13"><text x="0" y="8" font-size="9.5" font-family="Liberation Sans" fill="#8cc4f0" letter-spacing="-0.4">abc</text><path d="M0 11.5 H3.5 M5 11.5 H9 M10.5 11.5 H14" stroke="#8cc4f0" stroke-width="1.1"/><path d="M0 9.5 H14" stroke="#8cc4f0" stroke-width="0.8"/></svg>
<div class="a" style="left:667.0px;top:718.0px;height:20px;line-height:20px;color:#f0f0f0;font-size:13px;letter-spacing:-0.396px;word-spacing:-0.5px;white-space:pre;">String Generator [String]</div>
<div class="a " style="left:930px;top:718.7px;width:21px;height:16.6px;background:#2a2a2a;border-radius:3px;"></div>
<div class="a " style="left:940px;top:718.7px;width:1px;height:16.6px;background:#434a5c;"></div>
<svg class="a" style="left:930px;top:722px;" width="21" height="10" viewBox="0 0 21 10"><path d="M1.8 5 L5.2 1.8 H8 V8.2 H5.2 Z" fill="#6a6a6a"/><path d="M19.2 5 L15.8 1.8 H13 V8.2 H15.8 Z" fill="#d05ae0"/></svg>
<svg class="a" style="left:956px;top:722px;" width="10" height="10" viewBox="0 0 10 10"><circle cx="5" cy="5" r="4.2" fill="none" stroke="#b0b0b0" stroke-width="1"/><circle cx="5" cy="5" r="2.4" fill="#3aa0f0"/></svg>
<div class="a " style="left:930px;top:762.7px;width:21px;height:16.6px;background:#2a2a2a;border-radius:3px;"></div>
<svg class="a" style="left:931.5px;top:767px;" width="9" height="9" viewBox="0 0 9 9"><rect x="0.7" y="0.7" width="7.6" height="7.6" fill="none" stroke="#c8a84a" stroke-width="1.1"/></svg>
<div class="a " style="left:972px;top:672.7px;width:10px;height:288.5px;background:#4c4c4c;border-radius:5px;"></div>
<div class="a " style="left:620px;top:712.5px;width:355px;height:29.3px;border:3px solid #b4dc1e;box-sizing:border-box;"></div>
<div class="a " style="left:495px;top:964px;width:474px;height:9.5px;background:#4c4c4c;border-radius:4.7px;"></div>
<div class="a " style="left:986.5px;top:810px;width:1.6px;height:1.6px;background:#777;border-radius:1px;"></div>
<div class="a " style="left:986.5px;top:815px;width:1.6px;height:1.6px;background:#777;border-radius:1px;"></div>
<div class="a " style="left:986.5px;top:820px;width:1.6px;height:1.6px;background:#777;border-radius:1px;"></div>
<div class="a " style="left:991px;top:630.3px;width:923px;height:345.7px;background:#1f1f1f;"></div>
<div class="a " style="left:991px;top:631px;width:923px;height:22.8px;background:#242424;"></div>
<div class="a " style="left:991px;top:962.5px;width:923px;height:13.5px;background:#2c2c2c;"></div>
<div class="a " style="left:1000px;top:654.8px;width:905px;height:15px;background:#444;"></div>
<div class="a " style="left:1000px;top:670px;width:905px;height:293px;background:#2a2a2a;"></div>
<svg class="a" style="left:988.5px;top:630.3px;" width="925" height="24" viewBox="0 0 925 24"><rect x="10.80" y="16" width="1.3" height="7.7" fill="#8a8a8a"/><rect x="21.66" y="19.7" width="1.1" height="4" fill="#808080"/><rect x="32.52" y="19.7" width="1.1" height="4" fill="#808080"/><rect x="43.38" y="19.7" width="1.1" height="4" fill="#808080"/><rect x="54.24" y="19.7" width="1.1" height="4" fill="#808080"/><rect x="65.10" y="16" width="1.3" height="7.7" fill="#8a8a8a"/><rect x="75.96" y="19.7" width="1.1" height="4" fill="#808080"/><rect x="86.82" y="19.7" width="1.1" height="4" fill="#808080"/><rect x="97.68" y="19.7" width="1.1" height="4" fill="#808080"/><rect x="108.54" y="19.7" width="1.1" height="4" fill="#808080"/><rect x="119.40" y="16" width="1.3" height="7.7" fill="#8a8a8a"/><rect x="130.26" y="19.7" width="1.1" height="4" fill="#808080"/><rect x="141.12" y="19.7" width="1.1" height="4" fill="#808080"/><rect x="151.98" y="19.7" width="1.1" height="4" fill="#808080"/><rect x="162.84" y="19.7" width="1.1" height="4" fill="#808080"/><rect x="173.70" y="16" width="1.3" height="7.7" fill="#8a8a8a"/><rect x="184.56" y="19.7" width="1.1" height="4" fill="#808080"/><rect x="195.42" y="19.7" width="1.1" height="4" fill="#808080"/><rect x="206.28" y="19.7" width="1.1" height="4" fill="#808080"/><rect x="217.14" y="19.7" width="1.1" height="4" fill="#808080"/><rect x="228.00" y="16" width="1.3" height="7.7" fill="#8a8a8a"/><rect x="238.86" y="19.7" width="1.1" height="4" fill="#808080"/><rect x="249.72" y="19.7" width="1.1" height="4" fill="#808080"/><rect x="260.58" y="19.7" width="1.1" height="4" fill="#808080"/><rect x="271.44" y="19.7" width="1.1" height="4" fill="#808080"/><rect x="282.30" y="16" width="1.3" height="7.7" fill="#8a8a8a"/><rect x="293.16" y="19.7" width="1.1" height="4" fill="#808080"/><rect x="304.02" y="19.7" width="1.1" height="4" fill="#808080"/><rect x="314.88" y="19.7" width="1.1" height="4" fill="#808080"/><rect x="325.74" y="19.7" width="1.1" height="4" fill="#808080"/><rect x="336.60" y="16" width="1.3" height="7.7" fill="#8a8a8a"/><rect x="347.46" y="19.7" width="1.1" height="4" fill="#808080"/><rect x="358.32" y="19.7" width="1.1" height="4" fill="#808080"/><rect x="369.18" y="19.7" width="1.1" height="4" fill="#808080"/><rect x="380.04" y="19.7" width="1.1" height="4" fill="#808080"/><rect x="390.90" y="16" width="1.3" height="7.7" fill="#8a8a8a"/><rect x="401.76" y="19.7" width="1.1" height="4" fill="#808080"/><rect x="412.62" y="19.7" width="1.1" height="4" fill="#808080"/><rect x="423.48" y="19.7" width="1.1" height="4" fill="#808080"/><rect x="434.34" y="19.7" width="1.1" height="4" fill="#808080"/><rect x="445.20" y="16" width="1.3" height="7.7" fill="#8a8a8a"/><rect x="456.06" y="19.7" width="1.1" height="4" fill="#808080"/><rect x="466.92" y="19.7" width="1.1" height="4" fill="#808080"/><rect x="477.78" y="19.7" width="1.1" height="4" fill="#808080"/><rect x="488.64" y="19.7" width="1.1" height="4" fill="#808080"/><rect x="499.50" y="16" width="1.3" height="7.7" fill="#8a8a8a"/><rect x="510.36" y="19.7" width="1.1" height="4" fill="#808080"/><rect x="521.22" y="19.7" width="1.1" height="4" fill="#808080"/><rect x="532.08" y="19.7" width="1.1" height="4" fill="#808080"/><rect x="542.94" y="19.7" width="1.1" height="4" fill="#808080"/><rect x="553.80" y="16" width="1.3" height="7.7" fill="#8a8a8a"/><rect x="564.66" y="19.7" width="1.1" height="4" fill="#808080"/><rect x="575.52" y="19.7" width="1.1" height="4" fill="#808080"/><rect x="586.38" y="19.7" width="1.1" height="4" fill="#808080"/><rect x="597.24" y="19.7" width="1.1" height="4" fill="#808080"/><rect x="608.10" y="16" width="1.3" height="7.7" fill="#8a8a8a"/><rect x="618.96" y="19.7" width="1.1" height="4" fill="#808080"/><rect x="629.82" y="19.7" width="1.1" height="4" fill="#808080"/><rect x="640.68" y="19.7" width="1.1" height="4" fill="#808080"/><rect x="651.54" y="19.7" width="1.1" height="4" fill="#808080"/><rect x="662.40" y="16" width="1.3" height="7.7" fill="#8a8a8a"/><rect x="673.26" y="19.7" width="1.1" height="4" fill="#808080"/><rect x="684.12" y="19.7" width="1.1" height="4" fill="#808080"/><rect x="694.98" y="19.7" width="1.1" height="4" fill="#808080"/><rect x="705.84" y="19.7" width="1.1" height="4" fill="#808080"/><rect x="716.70" y="16" width="1.3" height="7.7" fill="#8a8a8a"/><rect x="727.56" y="19.7" width="1.1" height="4" fill="#808080"/><rect x="738.42" y="19.7" width="1.1" height="4" fill="#808080"/><rect x="749.28" y="19.7" width="1.1" height="4" fill="#808080"/><rect x="760.14" y="19.7" width="1.1" height="4" fill="#808080"/><rect x="771.00" y="16" width="1.3" height="7.7" fill="#8a8a8a"/><rect x="781.86" y="19.7" width="1.1" height="4" fill="#808080"/><rect x="792.72" y="19.7" width="1.1" height="4" fill="#808080"/><rect x="803.58" y="19.7" width="1.1" height="4" fill="#808080"/><rect x="814.44" y="19.7" width="1.1" height="4" fill="#808080"/><rect x="825.30" y="16" width="1.3" height="7.7" fill="#8a8a8a"/><rect x="836.16" y="19.7" width="1.1" height="4" fill="#808080"/><rect x="847.02" y="19.7" width="1.1" height="4" fill="#808080"/><rect x="857.88" y="19.7" width="1.1" height="4" fill="#808080"/><rect x="868.74" y="19.7" width="1.1" height="4" fill="#808080"/><rect x="879.60" y="16" width="1.3" height="7.7" fill="#8a8a8a"/><rect x="890.46" y="19.7" width="1.1" height="4" fill="#808080"/><rect x="901.32" y="19.7" width="1.1" height="4" fill="#808080"/><rect x="912.18" y="19.7" width="1.1" height="4" fill="#808080"/><rect x="923.04" y="19.7" width="1.1" height="4" fill="#808080"/></svg>
<div class="a" style="left:994.5px;top:628.5px;height:20px;line-height:20px;color:#dcdcdc;font-size:13px;letter-spacing:-0.506px;word-spacing:-0.5px;white-space:pre;">0</div>
<div class="a" style="left:1047.6px;top:628.5px;height:20px;line-height:20px;color:#dcdcdc;font-size:13px;letter-spacing:-0.506px;word-spacing:-0.5px;white-space:pre;">15</div>
<div class="a" style="left:1101.9px;top:628.5px;height:20px;line-height:20px;color:#dcdcdc;font-size:13px;letter-spacing:-0.506px;word-spacing:-0.5px;white-space:pre;">30</div>
<div class="a" style="left:1156.2px;top:628.5px;height:20px;line-height:20px;color:#dcdcdc;font-size:13px;letter-spacing:-0.506px;word-spacing:-0.5px;white-space:pre;">45</div>
<div class="a" style="left:1210.5px;top:628.5px;height:20px;line-height:20px;color:#dcdcdc;font-size:13px;letter-spacing:-0.506px;word-spacing:-0.5px;white-space:pre;">60</div>
<div class="a" style="left:1264.8px;top:628.5px;height:20px;line-height:20px;color:#dcdcdc;font-size:13px;letter-spacing:-0.506px;word-spacing:-0.5px;white-space:pre;">75</div>
<div class="a" style="left:1319.1px;top:628.5px;height:20px;line-height:20px;color:#dcdcdc;font-size:13px;letter-spacing:-0.506px;word-spacing:-0.5px;white-space:pre;">90</div>
<div class="a" style="left:1370.0px;top:628.5px;height:20px;line-height:20px;color:#dcdcdc;font-size:13px;letter-spacing:-0.506px;word-spacing:-0.5px;white-space:pre;">105</div>
<div class="a" style="left:1424.3px;top:628.5px;height:20px;line-height:20px;color:#dcdcdc;font-size:13px;letter-spacing:-0.506px;word-spacing:-0.5px;white-space:pre;">120</div>
<div class="a" style="left:1478.6px;top:628.5px;height:20px;line-height:20px;color:#dcdcdc;font-size:13px;letter-spacing:-0.506px;word-spacing:-0.5px;white-space:pre;">135</div>
<div class="a" style="left:1532.9px;top:628.5px;height:20px;line-height:20px;color:#dcdcdc;font-size:13px;letter-spacing:-0.506px;word-spacing:-0.5px;white-space:pre;">150</div>
<div class="a" style="left:1587.2px;top:628.5px;height:20px;line-height:20px;color:#dcdcdc;font-size:13px;letter-spacing:-0.506px;word-spacing:-0.5px;white-space:pre;">165</div>
<div class="a" style="left:1641.5px;top:628.5px;height:20px;line-height:20px;color:#dcdcdc;font-size:13px;letter-spacing:-0.506px;word-spacing:-0.5px;white-space:pre;">180</div>
<div class="a" style="left:1695.8px;top:628.5px;height:20px;line-height:20px;color:#dcdcdc;font-size:13px;letter-spacing:-0.506px;word-spacing:-0.5px;white-space:pre;">195</div>
<div class="a" style="left:1750.1px;top:628.5px;height:20px;line-height:20px;color:#dcdcdc;font-size:13px;letter-spacing:-0.506px;word-spacing:-0.5px;white-space:pre;">210</div>
<div class="a" style="left:1804.4px;top:628.5px;height:20px;line-height:20px;color:#dcdcdc;font-size:13px;letter-spacing:-0.506px;word-spacing:-0.5px;white-space:pre;">225</div>
<div class="a" style="left:1858.7px;top:628.5px;height:20px;line-height:20px;color:#dcdcdc;font-size:13px;letter-spacing:-0.506px;word-spacing:-0.5px;white-space:pre;">240</div>
<div class="a " style="left:995px;top:653px;width:5px;height:17.7px;background:#72cdb2;border-radius:1.5px;"></div>
<div class="a " style="left:1905px;top:653px;width:5px;height:17.5px;background:#72cdb2;border-radius:1.5px;"></div>
<div class="a " style="left:1000px;top:673.8px;width:905px;height:18px;background:repeating-linear-gradient(135deg,#e2fa9c 0px,#d1f18a 0.8px,#cbec82 13.4px,#d4f28e 13.9px,#bcde78 14.6px,#b6d870 24.4px,#e2fa9c 25.03px);"></div>
<div class="a " style="left:1000px;top:696.2px;width:905px;height:17.6px;background:repeating-linear-gradient(135deg,#e2fa9c 0px,#d1f18a 0.8px,#cbec82 13.4px,#d4f28e 13.9px,#bcde78 14.6px,#b6d870 24.4px,#e2fa9c 25.03px);"></div>
<div class="a " style="left:1000px;top:718px;width:905px;height:17.8px;background:repeating-linear-gradient(135deg,#8cc6f8 0px,#7cb0f3 2px,#76a8f1 13.4px,#6e9cec 14.6px,#6e9cec 25.03px);border:1px solid #f4f4f4;box-sizing:border-box;"></div>
<div class="a" style="left:1001px;top:719px;width:903px;height:15.8px;opacity:.7;background-image:radial-gradient(circle,#4f7cd8 0.9px,transparent 1.35px);background-size:3px 3px;"></div>
<div class="a " style="left:1000px;top:740px;width:905px;height:18px;background:#ffe680;border-radius:3px;"></div>
<div class="a " style="left:1000px;top:762px;width:905px;height:18px;background:#b794ff;border-radius:3px;"></div>
<div class="a" style="left:1008.0px;top:672.8px;height:20px;line-height:20px;color:#333;font-size:13px;letter-spacing:-0.463px;word-spacing:-0.5px;white-space:pre;">Oscillator [Position.Z] Cosine</div>
<div class="a" style="left:1008.0px;top:694.8px;height:20px;line-height:20px;color:#333;font-size:13px;letter-spacing:-0.399px;word-spacing:-0.5px;white-space:pre;">Oscillator [Position.X] Sine Driver</div>
<div class="a" style="left:1008.0px;top:716.8px;height:20px;line-height:20px;color:#fff;font-size:13px;letter-spacing:-0.396px;word-spacing:-0.5px;white-space:pre;">String Generator [String]</div>
<div class="a" style="left:1008.0px;top:760.8px;height:20px;line-height:20px;color:#fff;font-size:13px;letter-spacing:-0.581px;word-spacing:-0.5px;white-space:pre;">Cavalry</div>
<div class="a " style="left:1386.8px;top:650px;width:1.4px;height:313px;background:#72cdb2;"></div>
<svg class="a" style="left:1380px;top:643.5px;" width="15" height="9.5" viewBox="0 0 15 9.5"><path d="M0.3 0.3 H14.7 L7.5 9.2 Z" fill="#72cdb2"/></svg>
<div class="a " style="left:834.4px;top:743px;width:434.6px;height:30.7px;background:#262626;box-shadow:3px 3px 4px rgba(0,0,0,.45);"></div>
<div class="a" style="left:836.5px;top:740.8px;height:20px;line-height:20px;color:#d6d6d6;font-size:13px;letter-spacing:-0.507px;word-spacing:-0.5px;white-space:pre;">String Generator</div>
<div class="a" style="left:836.5px;top:755.6px;height:20px;line-height:20px;color:#d6d6d6;font-size:13px;letter-spacing:-0.654px;word-spacing:-0.5px;white-space:pre;">Creates procedural strings such as dates and time, hashes, numbers and timecodes.</div>
<div class="a " style="left:992px;top:964.2px;width:920px;height:9.3px;background:#4c4c4c;border-radius:4.6px;"></div>
<div class="a " style="left:494px;top:976px;width:490.3px;height:21.9px;background:#444;"></div>
<div class="a " style="left:497.4px;top:978.5px;width:18.6px;height:17px;background:#262626;border-radius:4px;border:1px solid #1a1a1a;box-sizing:border-box;"></div>
<svg class="a" style="left:499.7px;top:982.5px;" width="14" height="9" viewBox="0 0 14 9"><path d="M0.5 4.5 L4 0.5 H13.5 V8.5 H4 Z" fill="#c8c8c8"/><circle cx="4.6" cy="4.5" r="1.3" fill="#262626"/></svg>
<div class="a" style="left:520.7px;top:978.2px;height:20px;line-height:20px;color:#e6e6e6;font-size:13px;letter-spacing:-0.696px;word-spacing:-0.5px;white-space:pre;">1 selected</div>
<div class="a " style="left:775.5px;top:978.5px;width:18.5px;height:17px;background:#262626;border-radius:4px;border:1px solid #1a1a1a;box-sizing:border-box;"></div>
<svg class="a" style="left:779.2px;top:981.5px;" width="11" height="11" viewBox="0 0 11 11"><rect x="0.7" y="0.7" width="9.6" height="9.6" fill="none" stroke="#d0d0d0" stroke-width="1.2"/><rect x="4" y="4" width="3" height="3" fill="#d0d0d0"/></svg>
<div class="a " style="left:798.8px;top:978px;width:182px;height:18px;background:#555;border-radius:4px;"></div>
<div class="a " style="left:800px;top:979px;width:85px;height:16px;background:#222;border-radius:3px;"></div>
<svg class="a" style="left:804.3px;top:982px;" width="13" height="11" viewBox="0 0 13 11"><path d="M2 1 H12 M0.5 5.3 H8 M3 9.6 H11" stroke="#3ecf7d" stroke-width="1.9"/></svg>
<div class="a" style="left:821.0px;top:978.2px;height:20px;line-height:20px;color:#f0f0f0;font-size:13px;letter-spacing:-0.471px;word-spacing:-0.5px;white-space:pre;">Time Editor</div>
<svg class="a" style="left:893px;top:981.5px;" width="13" height="12" viewBox="0 0 13 12"><path d="M2 0 V10.5 H13 M0 8.5 H2" fill="none" stroke="#c8c8c8" stroke-width="1.1"/><path d="M2 10.5 L10.5 3" stroke="#c8c8c8" stroke-width="1.1"/></svg>
<div class="a" style="left:909.7px;top:978.2px;height:20px;line-height:20px;color:#e6e6e6;font-size:13px;letter-spacing:-0.459px;word-spacing:-0.5px;white-space:pre;">Graph Editor</div>
<div class="a " style="left:991px;top:976px;width:923px;height:21.9px;background:#444;"></div>
<div class="a " style="left:994.8px;top:978.5px;width:17px;height:17px;background:#262626;border-radius:4px;border:1px solid #1a1a1a;box-sizing:border-box;"></div>
<svg class="a" style="left:996.5px;top:981px;" width="14" height="13" viewBox="0 0 14 13"><path d="M0.5 1.5 H13.5 M0.5 5.6 H2.3 M4.3 5.6 H13.5 M0.5 9.8 H7 M9 9.8 H11" stroke="#e8e8e8" stroke-width="1.7"/><path d="M13.5 9.5 V12.5 H10.5 Z" fill="#6ec9a0"/></svg>
<div class="a " style="left:1015px;top:978.5px;width:150px;height:17px;background:#2a2a2a;border-radius:3px;"></div>
<div class="a" style="left:1017.7px;top:978.2px;height:20px;line-height:20px;color:#f0f0f0;font-size:13px;letter-spacing:-0.562px;word-spacing:-0.5px;white-space:pre;">Default Keyframe Layer</div>
<div class="a " style="left:1171.6px;top:978.5px;width:69px;height:17px;background:#2a2a2a;border-radius:3px;"></div>
<div class="a" style="left:1176.0px;top:978.0px;height:20px;line-height:20px;color:#505050;font-size:13px;letter-spacing:-0.450px;word-spacing:-0.5px;white-space:pre;">F</div>
<div class="a" style="left:1187.0px;top:978.0px;height:20px;line-height:20px;color:#dcdcdc;font-size:13px;letter-spacing:-0.450px;word-spacing:-0.5px;white-space:pre;">-</div>
<div class="a" style="left:1246.9px;top:978.2px;height:20px;line-height:20px;color:#e6e6e6;font-size:13px;letter-spacing:-0.420px;word-spacing:-0.5px;white-space:pre;">Align:</div>
<div class="a " style="left:1283px;top:978px;width:54px;height:17.7px;background:#262626;border-radius:4px;border:1px solid #1a1a1a;box-sizing:border-box;"></div>
<div class="a " style="left:1300.5px;top:979px;width:1px;height:15.7px;background:#3c3c3c;"></div>
<div class="a " style="left:1318.5px;top:979px;width:1px;height:15.7px;background:#3c3c3c;"></div>
<svg class="a" style="left:1283px;top:978px;" width="54" height="18" viewBox="0 0 54 18"><path d="M3.6 3 V15" stroke="#e4e4e4" stroke-width="1.1"/><path d="M9 5.9 H13.4 M9 11.7 H15.5" stroke="#e4e4e4" stroke-width="1.6"/><circle cx="7.2" cy="5.9" r="1" fill="#6ec9a8"/><circle cx="7.2" cy="11.7" r="1" fill="#6ec9a8"/><path d="M27.6 2.5 V15.5" stroke="#6ec9a8" stroke-width="1"/><path d="M23.6 5.9 H25.8 M29.4 5.9 H31.6 M22.1 11.7 H25.8 M29.4 11.7 H33" stroke="#e4e4e4" stroke-width="1.6"/><circle cx="27.6" cy="5.9" r="1.1" fill="#6ec9a8"/><circle cx="27.6" cy="11.7" r="1.1" fill="#6ec9a8"/><path d="M50.8 3 V15" stroke="#e4e4e4" stroke-width="1.1"/><path d="M41.8 5.9 H45.4 M38.1 11.7 H45.4" stroke="#e4e4e4" stroke-width="1.6"/><circle cx="47.3" cy="5.9" r="1" fill="#6ec9a8"/><circle cx="47.3" cy="11.7" r="1" fill="#6ec9a8"/></svg>
<div class="a " style="left:1340px;top:978px;width:17.5px;height:17.7px;background:#262626;border-radius:4px;border:1px solid #1a1a1a;box-sizing:border-box;"></div>
<svg class="a" style="left:1342px;top:980px;" width="14" height="14" viewBox="0 0 14 14"><rect x="1.5" y="1.5" width="11" height="11" fill="none" stroke="#a0a0a0" stroke-width="1"/><rect x="0.3" y="0.3" width="2.4" height="2.4" fill="#2a2a2a" stroke="#b0b0b0" stroke-width="0.7"/><rect x="11.3" y="0.3" width="2.4" height="2.4" fill="#2a2a2a" stroke="#b0b0b0" stroke-width="0.7"/><rect x="0.3" y="11.3" width="2.4" height="2.4" fill="#2a2a2a" stroke="#b0b0b0" stroke-width="0.7"/><rect x="11.3" y="11.3" width="2.4" height="2.4" fill="#2a2a2a" stroke="#b0b0b0" stroke-width="0.7"/><rect x="6" y="6" width="2" height="2" fill="#e4e4e4"/></svg>
<div class="a " style="left:1361px;top:978px;width:31px;height:17.7px;background:#262626;border-radius:4px;border:1px solid #1a1a1a;box-sizing:border-box;"></div>
<div class="a " style="left:1380.5px;top:979px;width:1px;height:15.7px;background:#3c3c3c;"></div>
<svg class="a" style="left:1362.5px;top:979.5px;" width="14" height="13" viewBox="0 0 14 13"><g transform="scale(1.3)"><path d="M3.4 6.1 L6.24 3.24 A3.2 3.2 0 0 1 10.76 7.76 L7.9 10.6" fill="none" stroke="#e4e4e4" stroke-width="2.2"/></g></svg>
<svg class="a" style="left:1383.5px;top:983.5px;" width="6" height="7" viewBox="0 0 6 7"><path d="M0.6 0.6 L5 3.5 L0.6 6.4 Z" fill="none" stroke="#8a8a8a" stroke-width="0.9"/></svg>
<div class="a " style="left:1396px;top:978px;width:31.6px;height:17.7px;background:#262626;border-radius:4px;border:1px solid #1a1a1a;box-sizing:border-box;"></div>
<div class="a " style="left:1415.5px;top:979px;width:1px;height:15.7px;background:#3c3c3c;"></div>
<svg class="a" style="left:1398.5px;top:981px;" width="15" height="12" viewBox="0 0 15 12"><path d="M0 6 H3 M11 6 H15" stroke="#e4e4e4" stroke-width="0.9"/><path d="M4.5 3.5 V8.5 M7 0.5 V11.5 M9.2 3.5 V8.5" stroke="#e4e4e4" stroke-width="1"/></svg>
<svg class="a" style="left:1418.5px;top:983.5px;" width="6" height="7" viewBox="0 0 6 7"><path d="M0.6 0.6 L5 3.5 L0.6 6.4 Z" fill="none" stroke="#8a8a8a" stroke-width="0.9"/></svg>
<svg class="a" style="left:1743px;top:980.5px;" width="14" height="14" viewBox="0 0 14 14"><circle cx="6" cy="6" r="4.8" fill="none" stroke="#c8c8c8" stroke-width="1.1"/><path d="M3.7 6 H8.3" stroke="#c8c8c8" stroke-width="1.1"/><path d="M9.7 9.7 L13 13" stroke="#c8c8c8" stroke-width="1.5"/></svg>
<div class="a " style="left:1767px;top:985.5px;width:115px;height:3.5px;background:#4e4e4e;border-radius:2px;"></div>
<svg class="a" style="left:1761.5px;top:981.5px;" width="11" height="11" viewBox="0 0 11 11"><circle cx="5.5" cy="5.5" r="5.3" fill="#72cdb2"/><circle cx="5.5" cy="5.5" r="2" fill="#4fa48c"/></svg>
<svg class="a" style="left:1887px;top:980.5px;" width="14" height="14" viewBox="0 0 14 14"><circle cx="6" cy="6" r="4.8" fill="none" stroke="#c8c8c8" stroke-width="1.1"/><path d="M3.7 6 H8.3 M6 3.7 V8.3" stroke="#c8c8c8" stroke-width="1.1"/><path d="M9.7 9.7 L13 13" stroke="#c8c8c8" stroke-width="1.5"/></svg>
<div class="a " style="left:494px;top:1004px;width:1420px;height:22px;background:#3a3a3a;"></div>
<svg class="a" style="left:498px;top:1008px;" width="3" height="14" viewBox="0 0 3 14"><circle cx="1.5" cy="2" r="0.9" fill="#888"/><circle cx="1.5" cy="7" r="0.9" fill="#888"/><circle cx="1.5" cy="12" r="0.9" fill="#888"/></svg>
<div class="a " style="left:507.4px;top:1006.5px;width:17px;height:17px;background:#262626;border-radius:4px;border:1px solid #1a1a1a;box-sizing:border-box;"></div>
<svg class="a" style="left:509.5px;top:1009px;" width="13" height="13" viewBox="0 0 13 13"><path d="M0.5 0.5 H11.5 V8.5 H8.5 V11.5 L5.5 8.5 H0.5 Z" fill="#e0e0e0"/><path d="M2.5 3 H9.5 M2.5 5.8 H9.5" stroke="#262626" stroke-width="1"/><path d="M13 10 V13 H10 Z" fill="#6ec9a0"/></svg>
<div class="a " style="left:528px;top:1008.4px;width:18.2px;height:13px;background:#d9c36a;border-radius:2px;"></div>
<div class="a" style="left:533.5px;top:1005.7px;height:20px;line-height:20px;color:#333;font-size:12px;letter-spacing:-0.415px;word-spacing:-0.5px;white-space:pre;">0</div>
<div class="a " style="left:553.7px;top:1012px;width:6px;height:6px;background:#d9c36a;border-radius:50%;"></div>
<div class="a" style="left:565.0px;top:1006.3px;height:20px;line-height:20px;color:#e6e6e6;font-size:13px;letter-spacing:-0.673px;word-spacing:-0.5px;white-space:pre;">You are working in an unsaved scene.</div>
<div class="a " style="left:1609.8px;top:1006.2px;width:80.2px;height:17.3px;background:#d9c36a;border-radius:2px;"></div>
<div class="a" style="left:1615.4px;top:1006.0px;height:20px;line-height:20px;color:#2a2a2a;font-size:13px;letter-spacing:-0.849px;word-spacing:-0.5px;white-space:pre;">Feedback</div>
<svg class="a" style="left:1672px;top:1008px;" width="14" height="14" viewBox="0 0 14 14"><path d="M2 1 H9 L12 4 V13 H2 Z" fill="#f4f4f4" stroke="#b0a070" stroke-width="0.6"/><path d="M4 5 H9 M4 7.5 H10 M4 10 H8" stroke="#aaa" stroke-width="0.8"/><path d="M7 10.5 L12.5 3.5 L13.8 4.6 L8.3 11.6 L6.6 12.2 Z" fill="#e8963c"/></svg>
<div class="a " style="left:1693px;top:1006.2px;width:108.8px;height:17.3px;background:#2fcf73;border-radius:2px;"></div>
<div class="a" style="left:1698.0px;top:1006.0px;height:20px;line-height:20px;color:#1e3a2a;font-size:13px;letter-spacing:-0.555px;word-spacing:-0.5px;white-space:pre;">Upgrade to Pro</div>
<svg class="a" style="left:1782px;top:1009px;" width="15" height="12" viewBox="0 0 15 12"><path d="M1 5 Q1 1 3.5 2 L5 4 Q7 5 6.5 8 Q6 11.5 3.5 11 Q1 10.5 1 5 Z M14 5 Q14 1 11.5 2 L10 4 Q8 5 8.5 8 Q9 11.5 11.5 11 Q14 10.5 14 5 Z" fill="#f4c430"/></svg>
<div class="a " style="left:1804.8px;top:1006.2px;width:106.5px;height:17.3px;background:#3a9fea;border-radius:2px;"></div>
<div class="a" style="left:1810.0px;top:1006.0px;height:20px;line-height:20px;color:#14304a;font-size:13px;letter-spacing:-0.596px;word-spacing:-0.5px;white-space:pre;">Tips and Tricks</div>
<svg class="a" style="left:1891px;top:1008px;" width="15" height="14" viewBox="0 0 15 14"><path d="M13.5 0.8 Q8 1 5 5.5 L4 9 L6.5 10.5 L9.5 9.5 Q13.5 6.5 13.5 0.8 Z" fill="#e8e8f0"/><circle cx="9.7" cy="4.7" r="1.3" fill="#4a90d0"/><path d="M5 5.5 L1.5 6.5 L3.8 8.2 Z M9 9.8 L8.3 13 L6.5 10.8 Z" fill="#d84040"/><path d="M3.8 9.8 L1 13 L4.8 11 Z" fill="#f0a030"/></svg>
</body></html>
